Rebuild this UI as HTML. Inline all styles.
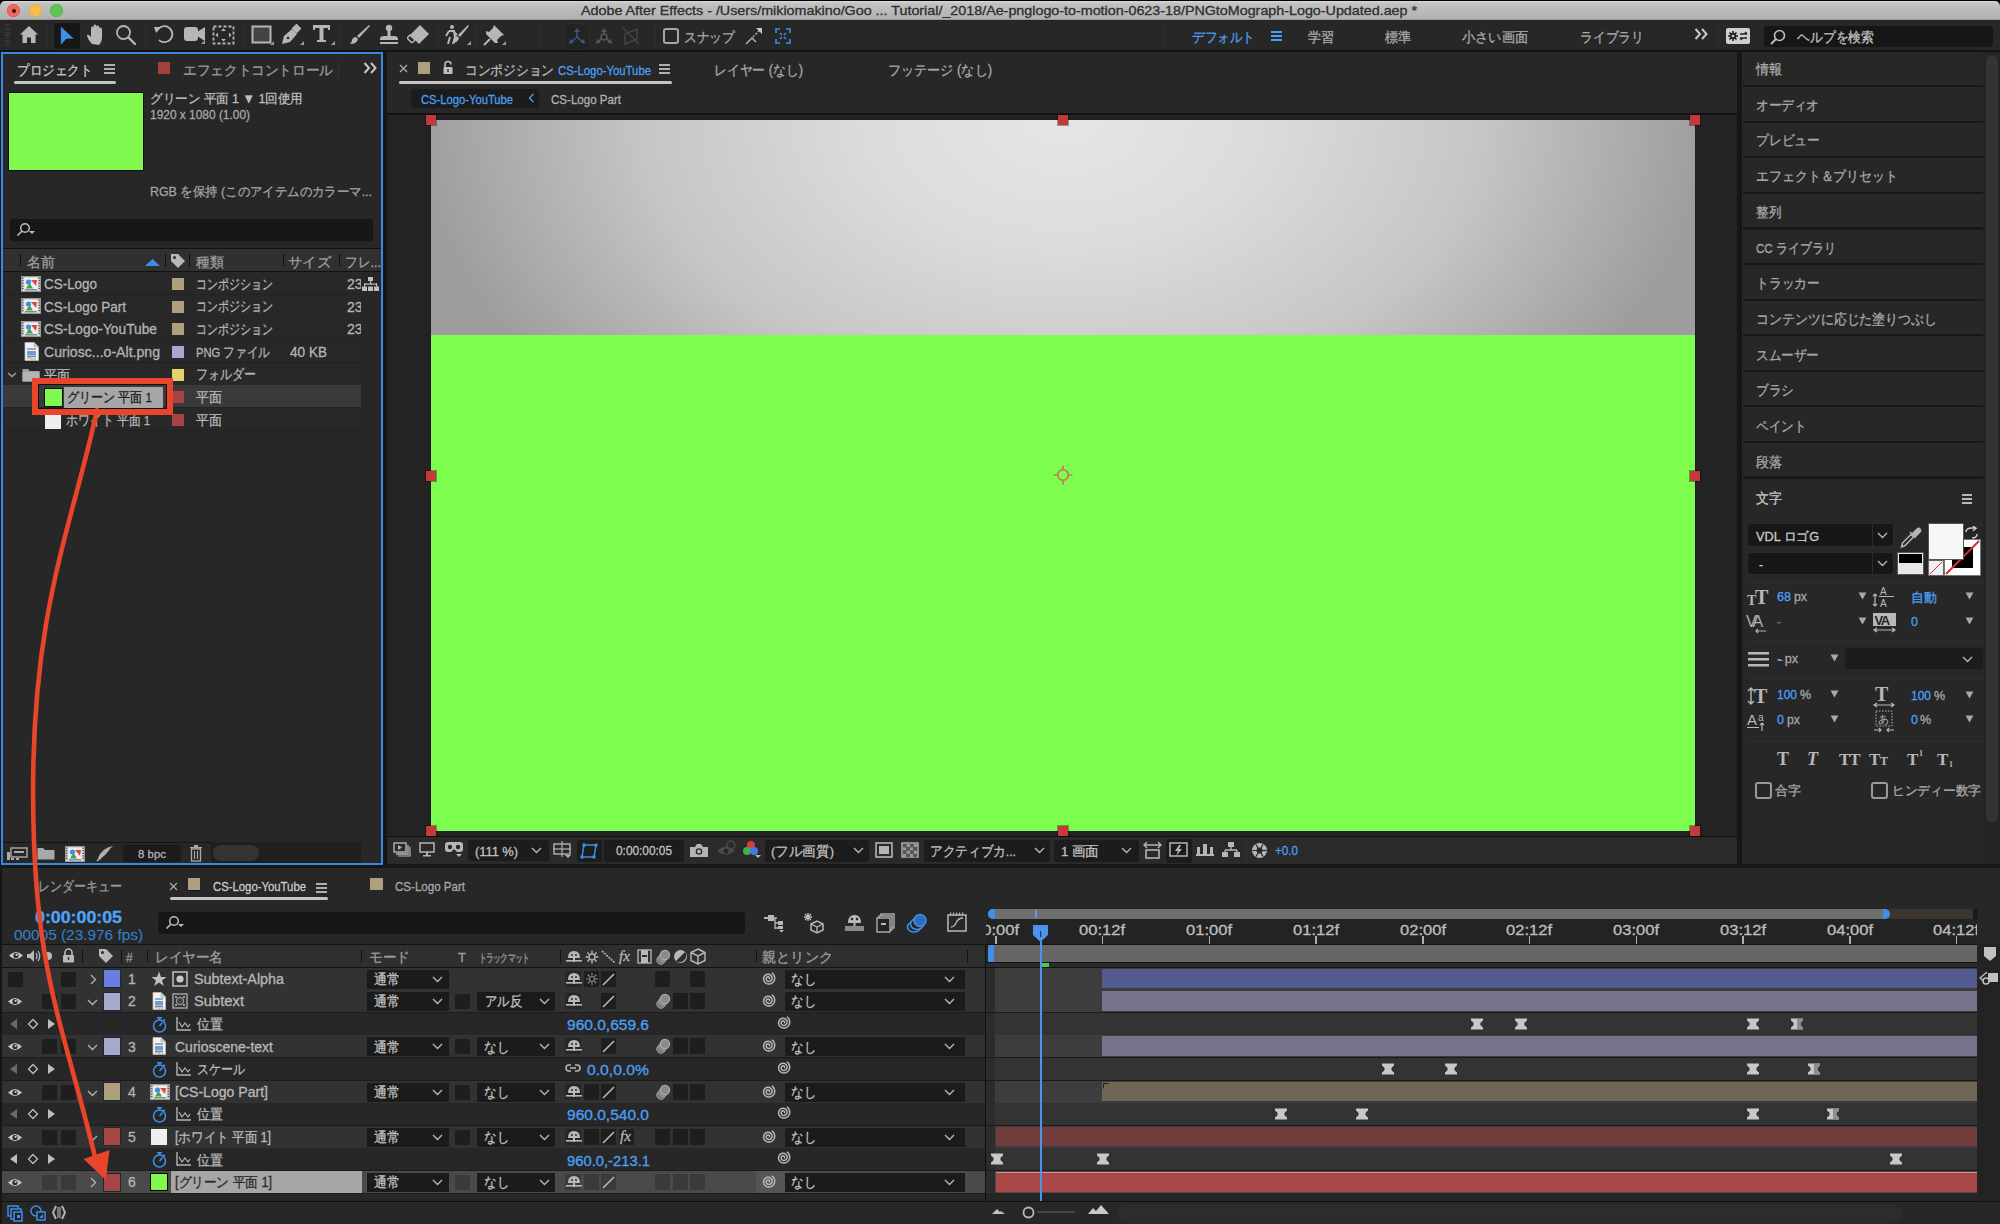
<!DOCTYPE html><html><head><meta charset="utf-8"><style>
html,body{margin:0;padding:0;}
body{width:2000px;height:1224px;position:relative;overflow:hidden;background:#161616;font-family:"Liberation Sans",sans-serif;}
body>div,body>svg{position:absolute;}
.t{white-space:nowrap;-webkit-text-stroke:0.3px currentColor;}
</style></head><body>
<div style="left:0px;top:0px;width:2000px;height:20px;background:#000;"></div>
<div style="left:0px;top:1px;width:2000px;height:19px;background:linear-gradient(#dadada 0px,#c2c2c2 2.5px,#b0b0b0 19px);border-radius:5px 5px 0 0;"></div>
<div style="left:0px;top:19px;width:2000px;height:1px;background:#9a9a9a;"></div>
<div style="left:7.0px;top:4px;width:13px;height:13px;border-radius:50%;background:#ee6a5f;box-shadow:inset 0 0 0 0.5px #d0534a;"></div>
<div style="left:28.5px;top:4px;width:13px;height:13px;border-radius:50%;background:#f5bd4f;box-shadow:inset 0 0 0 0.5px #d9a23a;"></div>
<div style="left:50.0px;top:4px;width:13px;height:13px;border-radius:50%;background:#61c554;box-shadow:inset 0 0 0 0.5px #4ea942;"></div>
<div style="left:11.5px;top:8.5px;width:4px;height:4px;background:#3a0c08;border-radius:50%;"></div>
<div class="t" style="left:581px;top:4.30px;font-size:13px;line-height:13px;color:#2e2e2e;transform:scaleX(1.1001);transform-origin:0 0;">Adobe After Effects - /Users/mikiomakino/Goo ... Tutorial/_2018/Ae-pnglogo-to-motion-0623-18/PNGtoMograph-Logo-Updated.aep *</div>
<div style="left:0px;top:20px;width:2000px;height:31px;background:#272727;"></div>
<div style="left:0px;top:50px;width:2000px;height:2px;background:#121212;"></div>
<div style="left:5px;top:24.0px;width:5px;height:1.3px;background:#3a3a3a;"></div>
<div style="left:5px;top:26.6px;width:5px;height:1.3px;background:#3a3a3a;"></div>
<div style="left:5px;top:29.2px;width:5px;height:1.3px;background:#3a3a3a;"></div>
<div style="left:5px;top:31.8px;width:5px;height:1.3px;background:#3a3a3a;"></div>
<div style="left:5px;top:34.4px;width:5px;height:1.3px;background:#3a3a3a;"></div>
<div style="left:5px;top:37.0px;width:5px;height:1.3px;background:#3a3a3a;"></div>
<div style="left:5px;top:39.6px;width:5px;height:1.3px;background:#3a3a3a;"></div>
<div style="left:5px;top:42.2px;width:5px;height:1.3px;background:#3a3a3a;"></div>
<div style="left:5px;top:44.8px;width:5px;height:1.3px;background:#3a3a3a;"></div>
<div style="left:47px;top:23px;width:1px;height:25px;background:#2c2c2c;"></div>
<div style="left:145px;top:23px;width:1px;height:25px;background:#2c2c2c;"></div>
<div style="left:243px;top:23px;width:1px;height:25px;background:#2c2c2c;"></div>
<div style="left:340px;top:23px;width:1px;height:25px;background:#2c2c2c;"></div>
<div style="left:438px;top:23px;width:1px;height:25px;background:#2c2c2c;"></div>
<div style="left:476px;top:23px;width:1px;height:25px;background:#2c2c2c;"></div>
<div style="left:540px;top:23px;width:1px;height:25px;background:#2c2c2c;"></div>
<div style="left:655px;top:23px;width:1px;height:25px;background:#2c2c2c;"></div>
<div style="left:1164px;top:23px;width:1px;height:25px;background:#2c2c2c;"></div>
<div style="left:1718px;top:23px;width:1px;height:25px;background:#2c2c2c;"></div>
<svg style="left:19px;top:25px;" width="20" height="19" viewBox="0 0 20 19"><path d="M10,1 L19,9.5 L16.5,9.5 V18 H12 V12.5 H8 V18 H3.5 V9.5 H1 Z" fill="#b6b6b6"/></svg>
<div style="left:54px;top:23px;width:26px;height:26px;background:#171717;border-radius:3px;box-shadow:0 0 0 1px #2a2a2a;"></div>
<svg style="left:59px;top:25px;" width="17" height="21" viewBox="0 0 17 21"><polygon points="1.5,1 15.5,14 7.5,14 1.5,20.5" fill="#3f8fe8" stroke="#0a0a0a" stroke-width="0.6"/></svg>
<svg style="left:86px;top:24px;" width="21" height="22" viewBox="0 0 21 22"><path d="M6,20 Q2,16 1,12 Q1,10 3,11 L5,13 V4 Q5,2.5 6.3,2.5 Q7.5,2.5 7.5,4 V10 V2 Q7.5,0.5 9,0.5 Q10.5,0.5 10.5,2 V10 V3 Q10.5,1.5 12,1.5 Q13.3,1.5 13.3,3 V10 V5 Q13.3,3.5 14.7,3.5 Q16,3.5 16,5 V14 Q16,18 13,21 Z" fill="#b6b6b6"/></svg>
<svg style="left:115px;top:24px;" width="22" height="22" viewBox="0 0 22 22"><circle cx="8.5" cy="8.5" r="6.5" fill="none" stroke="#b6b6b6" stroke-width="1.8"/><line x1="13.5" y1="13.5" x2="20" y2="20" stroke="#b6b6b6" stroke-width="2.4" stroke-linecap="round"/></svg>
<svg style="left:154px;top:24px;" width="21" height="21" viewBox="0 0 21 21"><path d="M3,7 A8,8 0 1,1 4,15" fill="none" stroke="#b6b6b6" stroke-width="1.8" stroke-dasharray="40 3 1.5 2 1.5 2 1.5 2 1.5"/><polygon points="0,3 7,3 2,9" fill="#b6b6b6"/></svg>
<svg style="left:183px;top:26px;" width="23" height="19" viewBox="0 0 23 19"><rect x="1" y="1" width="14" height="14" rx="3" fill="#b6b6b6"/><polygon points="14,6 22,1 22,15 14,10" fill="#b6b6b6"/><polygon points="18,18 22,14 22,18" fill="#9a9a9a"/></svg>
<svg style="left:212px;top:25px;" width="23" height="20" viewBox="0 0 23 20"><rect x="1.5" y="1.5" width="20" height="17" fill="none" stroke="#b6b6b6" stroke-width="1.8" stroke-dasharray="3,2"/><polygon points="11.5,3.5 14,6 9,6" fill="#b6b6b6"/><polygon points="11.5,16.5 14,14 9,14" fill="#b6b6b6"/><polygon points="3.5,10 6,7.5 6,12.5" fill="#b6b6b6"/><polygon points="19.5,10 17,7.5 17,12.5" fill="#b6b6b6"/></svg>
<svg style="left:251px;top:25px;" width="23" height="21" viewBox="0 0 23 21"><rect x="1.5" y="1.5" width="18" height="16" fill="#444" stroke="#b6b6b6" stroke-width="2"/><polygon points="19,20 23,16 23,20" fill="#9a9a9a"/></svg>
<svg style="left:281px;top:24px;" width="23" height="22" viewBox="0 0 23 22"><path d="M1,20 L3,12 L11,5 L16,10 L9,18 Z" fill="#b6b6b6"/><rect x="12" y="1" width="7" height="7" transform="rotate(45 15.5 4.5)" fill="#b6b6b6"/><circle cx="7" cy="14" r="1.3" fill="#232323"/><polygon points="19,21 23,17 23,21" fill="#9a9a9a"/></svg>
<svg style="left:312px;top:24px;" width="23" height="22" viewBox="0 0 23 22"><path d="M1,1 H18 V6 H16 V4 H11.5 V16 H14 V18 H5 V16 H7.5 V4 H3 V6 H1 Z" fill="#b6b6b6"/><polygon points="19,21 23,17 23,21" fill="#9a9a9a"/></svg>
<svg style="left:349px;top:24px;" width="22" height="22" viewBox="0 0 22 22"><path d="M20,1 L21,2 L10,14 L8,12 Z" fill="#b6b6b6"/><path d="M7,13 L9,15 Q8,20 1,20 Q3,18 3,16 Q4,13 7,13 Z" fill="#b6b6b6"/></svg>
<svg style="left:378px;top:24px;" width="22" height="22" viewBox="0 0 22 22"><circle cx="11" cy="4" r="3.2" fill="#b6b6b6"/><rect x="9.5" y="6" width="3" height="6" fill="#b6b6b6"/><path d="M2,15 Q2,12 6,12 H16 Q20,12 20,15 V16 H2 Z" fill="#b6b6b6"/><rect x="2" y="18" width="18" height="2" fill="#b6b6b6"/></svg>
<svg style="left:407px;top:24px;" width="24" height="22" viewBox="0 0 24 22"><path d="M13,1 L22,10 L12,20 L3,11 Z" fill="#b6b6b6"/><path d="M3,11 L8,16 L6,18 Q5,19 4,18 L1,15 Q0,14 1,13 Z" fill="none" stroke="#b6b6b6" stroke-width="1.5"/></svg>
<svg style="left:444px;top:24px;" width="28" height="22" viewBox="0 0 28 22"><circle cx="8" cy="3" r="2" fill="#b6b6b6"/><path d="M5,7 H10 L11,13 L9,20 M6,13 L4,20 M5,7 L2,12 M10,8 L13,11" fill="none" stroke="#b6b6b6" stroke-width="2"/><path d="M24,1 L25,2 L16,13 L14,11 Z" fill="#b6b6b6"/><path d="M13,12 L15,14 Q14,19 8,19 Q10,17 10,15 Q11,12 13,12 Z" fill="#b6b6b6"/><polygon points="23,21 27,17 27,21" fill="#9a9a9a"/></svg>
<svg style="left:483px;top:24px;" width="23" height="22" viewBox="0 0 23 22"><path d="M11,1 L21,11 L18,12 L14,16 L15,19 L12,19 L3,10 L3,7 L6,8 L10,4 Z" fill="#b6b6b6"/><line x1="7" y1="15" x2="1" y2="21" stroke="#b6b6b6" stroke-width="2"/><polygon points="19,21 23,17 23,21" fill="#9a9a9a"/></svg>
<div style="left:565px;top:24px;width:24px;height:25px;background:#232323;border-radius:3px;box-shadow:0 0 0 1px #2c2c2c;"></div>
<svg style="left:567px;top:27px;" width="20" height="18" viewBox="0 0 20 18"><path d="M10,2 V10 L3,16 M10,10 L17,16" fill="none" stroke="#36597f" stroke-width="1.6"/><polygon points="10,1 7,5 13,5" fill="#36597f"/><polygon points="2,17 3,12 7,15" fill="#36597f"/><polygon points="18,17 13,15 17,12" fill="#36597f"/></svg>
<svg style="left:594px;top:27px;" width="20" height="18" viewBox="0 0 20 18"><path d="M10,2 V7 M7,12 L3,16 M13,12 L17,16" fill="none" stroke="#555" stroke-width="1.6"/><circle cx="10" cy="10" r="3" fill="none" stroke="#555" stroke-width="1.6"/><polygon points="10,1 7,5 13,5" fill="#555"/><polygon points="2,17 3,12 7,15" fill="#555"/><polygon points="18,17 13,15 17,12" fill="#555"/></svg>
<svg style="left:621px;top:26px;" width="20" height="20" viewBox="0 0 20 20"><path d="M4,8 L16,3 V13 L4,18 Z M2,2 L18,18" fill="none" stroke="#444" stroke-width="1.5"/></svg>
<div style="left:663px;top:28px;width:16px;height:16px;background:transparent;box-sizing:border-box;border:2.2px solid #a5a5a5;border-radius:3px;"></div>
<div class="t" style="left:684px;top:30.57px;font-size:13.5px;line-height:13.5px;color:#a8a8a8;transform:scaleX(0.9107);transform-origin:0 0;width:56.00px;text-align:justify;text-align-last:justify;">スナップ</div>
<svg style="left:745px;top:27px;" width="18" height="18" viewBox="0 0 18 18"><path d="M1,17 L7,11 L11,15" fill="none" stroke="#b8b8b8" stroke-width="1.4"/><path d="M8,10 L15,3" stroke="#b8b8b8" stroke-width="1.4" stroke-dasharray="2,1.5"/><polygon points="17,1 17,7 11,1" fill="#c8c8c8"/></svg>
<svg style="left:775px;top:28px;" width="16" height="16" viewBox="0 0 16 16"><path d="M1,5 V1 H5 M11,1 H15 V5 M15,11 V15 H11 M5,15 H1 V11" fill="none" stroke="#3d8fe8" stroke-width="1.6"/><path d="M5,5 L7,7 M11,5 L9,7 M5,11 L7,9 M11,11 L9,9" stroke="#3d8fe8" stroke-width="1.4"/></svg>
<div class="t" style="left:1192px;top:30.15px;font-size:14px;line-height:14px;color:#4b9ff2;transform:scaleX(0.9000);transform-origin:0 0;width:70.00px;text-align:justify;text-align-last:justify;">デフォルト</div>
<div style="left:1271px;top:31px;width:11px;height:2px;background:#4b9ff2;"></div>
<div style="left:1271px;top:35px;width:11px;height:2px;background:#4b9ff2;"></div>
<div style="left:1271px;top:39px;width:11px;height:2px;background:#4b9ff2;"></div>
<div class="t" style="left:1308px;top:30.15px;font-size:14px;line-height:14px;color:#a8a8a8;transform:scaleX(0.9286);transform-origin:0 0;width:28.00px;text-align:justify;text-align-last:justify;">学習</div>
<div class="t" style="left:1385px;top:30.15px;font-size:14px;line-height:14px;color:#a8a8a8;transform:scaleX(0.9286);transform-origin:0 0;width:28.00px;text-align:justify;text-align-last:justify;">標準</div>
<div class="t" style="left:1462px;top:30.15px;font-size:14px;line-height:14px;color:#a8a8a8;transform:scaleX(0.9429);transform-origin:0 0;width:70.00px;text-align:justify;text-align-last:justify;">小さい画面</div>
<div class="t" style="left:1580px;top:30.15px;font-size:14px;line-height:14px;color:#a8a8a8;transform:scaleX(0.9143);transform-origin:0 0;width:70.00px;text-align:justify;text-align-last:justify;">ライブラリ</div>
<svg style="left:1694px;top:28px;" width="15" height="12" viewBox="0 0 15 12"><polyline points="1.5,1 6,6 1.5,11" fill="none" stroke="#c8c8c8" stroke-width="2"/><polyline points="8,1 12.5,6 8,11" fill="none" stroke="#c8c8c8" stroke-width="2"/></svg>
<div style="left:1726px;top:28px;width:24px;height:16px;background:#cfcfcf;border-radius:2px;"></div>
<svg style="left:1726px;top:28px;" width="24" height="16" viewBox="0 0 24 16"><circle cx="7" cy="8" r="3.2" fill="#232323"/><line x1="9.5" y1="8.0" x2="12.0" y2="8.0" stroke="#232323" stroke-width="1.6"/><line x1="8.768470672918" y1="9.767062952763414" x2="10.536941345835999" y2="11.53412590552683" stroke="#232323" stroke-width="1.6"/><line x1="7.001990816776833" y1="10.499999207329587" x2="7.003981633553666" y2="12.999998414659174" stroke="#232323" stroke-width="1.6"/><line x1="5.234345887949987" y1="9.76987727162108" x2="3.4686917758999742" y2="11.53975454324216" stroke="#232323" stroke-width="1.6"/><line x1="4.500003170681151" y1="8.003981632291216" x2="2.000006341362303" y2="8.007963264582434" stroke="#232323" stroke-width="1.6"/><line x1="5.228717252019318" y1="6.235755848328808" x2="3.457434504038636" y2="4.4715116966576165" stroke="#232323" stroke-width="1.6"/><line x1="6.994027554719296" y1="5.500007134030705" x2="6.9880551094385925" y2="3.0000142680614097" stroke="#232323" stroke-width="1.6"/><line x1="8.762833072521056" y1="6.227312898894458" x2="10.525666145042115" y2="4.454625797788916" stroke="#232323" stroke-width="1.6"/><circle cx="7" cy="8" r="1.3" fill="#cfcfcf"/><path d="M14,6 H21 M19,4 L21,6 M21,10 H14 M16,12 L14,10" fill="none" stroke="#232323" stroke-width="1.6"/></svg>
<div style="left:1764px;top:26px;width:229px;height:21px;background:#161616;border-radius:4px;box-shadow:0 0 0 1px #262626;"></div>
<svg style="left:1769px;top:29px;" width="18" height="16" viewBox="0 0 18 16"><circle cx="10.5" cy="6.5" r="5" fill="none" stroke="#c0c0c0" stroke-width="1.6"/><line x1="7" y1="10" x2="2" y2="15" stroke="#c0c0c0" stroke-width="1.8"/></svg>
<div class="t" style="left:1797px;top:30.15px;font-size:14px;line-height:14px;color:#c0c0c0;transform:scaleX(0.9167);transform-origin:0 0;width:84.00px;text-align:justify;text-align-last:justify;">ヘルプを検索</div>
<div style="left:1px;top:52px;width:382px;height:813px;background:#3a87de;"></div>
<div style="left:3px;top:54px;width:378px;height:809px;background:#272727;"></div>
<div style="left:387px;top:52px;width:1350px;height:812px;background:#272727;"></div>
<div style="left:1742px;top:52px;width:243px;height:812px;background:#272727;"></div>
<div style="left:1983px;top:52px;width:17px;height:812px;background:#242424;"></div>
<div style="left:1986px;top:55px;width:12px;height:767px;background:#333333;border-radius:6px;"></div>
<div style="left:2px;top:868px;width:1998px;height:356px;background:#272727;"></div>
<div style="left:387px;top:113px;width:1350px;height:2px;background:#121212;"></div>
<div style="left:387px;top:115px;width:1350px;height:721px;background:#232323;"></div>
<div style="left:387px;top:836px;width:1350px;height:1px;background:#0e0e0e;"></div>
<div style="left:387px;top:837px;width:1350px;height:27px;background:#2a2a2a;"></div>
<div style="left:430px;top:119px;width:1266px;height:713px;background:#2a1530;"></div>
<div style="left:431px;top:120px;width:1264px;height:215px;background:radial-gradient(ellipse 640px 420px at 632px 0px,#e6e6e6 0%,#dcdcdc 30%,#c6c6c6 65%,#9e9e9e 100%);"></div>
<div style="left:431px;top:335px;width:1264px;height:496px;background:#7dfd4d;"></div>
<div style="left:426px;top:115px;width:10px;height:10px;background:#c43a3c;box-shadow:0 0 0 1px rgba(0,0,0,0.35);"></div>
<div style="left:426px;top:470.5px;width:10px;height:10px;background:#c43a3c;box-shadow:0 0 0 1px rgba(0,0,0,0.35);"></div>
<div style="left:426px;top:826px;width:10px;height:10px;background:#c43a3c;box-shadow:0 0 0 1px rgba(0,0,0,0.35);"></div>
<div style="left:1058px;top:115px;width:10px;height:10px;background:#c43a3c;box-shadow:0 0 0 1px rgba(0,0,0,0.35);"></div>
<div style="left:1058px;top:826px;width:10px;height:10px;background:#c43a3c;box-shadow:0 0 0 1px rgba(0,0,0,0.35);"></div>
<div style="left:1690px;top:115px;width:10px;height:10px;background:#c43a3c;box-shadow:0 0 0 1px rgba(0,0,0,0.35);"></div>
<div style="left:1690px;top:470.5px;width:10px;height:10px;background:#c43a3c;box-shadow:0 0 0 1px rgba(0,0,0,0.35);"></div>
<div style="left:1690px;top:826px;width:10px;height:10px;background:#c43a3c;box-shadow:0 0 0 1px rgba(0,0,0,0.35);"></div>
<svg style="left:1053px;top:465px;" width="20" height="20" viewBox="0 0 20 20"><circle cx="10" cy="10" r="5.3" fill="none" stroke="#d06a5a" stroke-width="1.6"/><path d="M10,0.5 V4.7 M10,15.3 V19.5 M0.5,10 H4.7 M15.3,10 H19.5" stroke="#d0785a" stroke-width="1.7"/></svg>
<svg style="left:399px;top:64px;" width="9" height="9" viewBox="0 0 9 9"><line x1="1" y1="1" x2="8" y2="8" stroke="#aaa" stroke-width="1.2"/><line x1="8" y1="1" x2="1" y2="8" stroke="#aaa" stroke-width="1.2"/></svg>
<div style="left:418px;top:62px;width:12px;height:12px;background:#b09f7f;"></div>
<svg style="left:442px;top:60px;" width="12" height="15" viewBox="0 0 12 15"><path d="M3,7 V4.5 A3,3 0 0,1 9,4.5" fill="none" stroke="#c0c0c0" stroke-width="1.6"/><rect x="1.5" y="7" width="9" height="7" rx="1" fill="#c0c0c0"/><rect x="5.3" y="9" width="1.4" height="3" fill="#2a2a2a"/></svg>
<div class="t" style="left:465px;top:63.15px;font-size:14px;line-height:14px;color:#b8b8b8;transform:scaleX(0.9082);transform-origin:0 0;width:98.00px;text-align:justify;text-align-last:justify;">コンポジション</div>
<div class="t" style="left:558px;top:63.57px;font-size:13.5px;line-height:13.5px;color:#4b9ff2;transform:scaleX(0.8392);transform-origin:0 0;">CS-Logo-YouTube</div>
<div style="left:659px;top:64px;width:11px;height:2px;background:#b0b0b0;"></div>
<div style="left:659px;top:68px;width:11px;height:2px;background:#b0b0b0;"></div>
<div style="left:659px;top:72px;width:11px;height:2px;background:#b0b0b0;"></div>
<div style="left:399px;top:81px;width:273px;height:3px;background:#c4c4c4;border-radius:2px;"></div>
<div class="t" style="left:714px;top:63.15px;font-size:14px;line-height:14px;color:#a8a8a8;transform:scaleX(0.9155);transform-origin:0 0;width:97.22px;text-align:justify;text-align-last:justify;">レイヤー (なし)</div>
<div class="t" style="left:888px;top:63.15px;font-size:14px;line-height:14px;color:#a8a8a8;transform:scaleX(0.9351);transform-origin:0 0;width:111.22px;text-align:justify;text-align-last:justify;">フッテージ (なし)</div>
<div style="left:411px;top:89px;width:128px;height:19px;background:#1b1b1b;border-radius:3px;"></div>
<div class="t" style="left:421px;top:93.92px;font-size:12.5px;line-height:12.5px;color:#4b9ff2;transform:scaleX(0.8966);transform-origin:0 0;">CS-Logo-YouTube</div>
<svg style="left:528px;top:93px;" width="7" height="10" viewBox="0 0 7 10"><polyline points="5.5,1 1.5,5 5.5,9" fill="none" stroke="#4b9ff2" stroke-width="1.4"/></svg>
<div class="t" style="left:551px;top:93.92px;font-size:12.5px;line-height:12.5px;color:#b0b0b0;transform:scaleX(0.9244);transform-origin:0 0;">CS-Logo Part</div>
<svg style="left:393px;top:842px;" width="18" height="15" viewBox="0 0 18 15"><rect x="1" y="1" width="12" height="9" fill="none" stroke="#b5b5b5" stroke-width="1.4"/><polygon points="5,3 9,5.5 5,8" fill="#b5b5b5"/><path d="M3,12 H15 V3" fill="none" stroke="#b5b5b5" stroke-width="1.4"/><path d="M5,14 H17 V5" fill="none" stroke="#b5b5b5" stroke-width="1.2"/></svg>
<svg style="left:419px;top:842px;" width="16" height="15" viewBox="0 0 16 15"><rect x="1" y="1" width="14" height="9" fill="none" stroke="#b5b5b5" stroke-width="1.5"/><rect x="7" y="10" width="2" height="3" fill="#b5b5b5"/><rect x="4" y="13" width="8" height="1.5" fill="#b5b5b5"/></svg>
<svg style="left:444px;top:841px;" width="20" height="17" viewBox="0 0 20 17"><path d="M1,4 Q1,1 4,1 H16 Q19,1 19,4 V8 Q19,11 16,11 H13 L10,8 L7,11 H4 Q1,11 1,8 Z" fill="#b5b5b5"/><circle cx="6" cy="6" r="2.2" fill="#262626"/><circle cx="14" cy="6" r="2.2" fill="#262626"/><polygon points="12,13 18,13 15,16" fill="#b5b5b5"/></svg>
<div style="left:468px;top:840px;width:81px;height:21px;background:#1c1c1c;border-radius:3px;"></div>
<div class="t" style="left:475px;top:845.00px;font-size:13px;line-height:13px;color:#c0c0c0;transform:scaleX(0.9865);transform-origin:0 0;">(111 %)</div>
<svg style="left:531px;top:847px;" width="11" height="7" viewBox="0 0 11 7"><polyline points="1,1 5.5,5.5 10,1" fill="none" stroke="#b5b5b5" stroke-width="1.4"/></svg>
<svg style="left:553px;top:841px;" width="19" height="18" viewBox="0 0 19 18"><rect x="1" y="3" width="16" height="10" fill="none" stroke="#b5b5b5" stroke-width="1.4"/><line x1="9" y1="0" x2="9" y2="16" stroke="#b5b5b5" stroke-width="1.2"/><line x1="0" y1="8" x2="18" y2="8" stroke="#b5b5b5" stroke-width="1.2"/><polygon points="12,14 18,14 15,17" fill="#b5b5b5"/></svg>
<div style="left:577px;top:840px;width:25px;height:22px;background:#1c1c1c;border-radius:3px;"></div>
<svg style="left:580px;top:843px;" width="19" height="16" viewBox="0 0 19 16"><polygon points="4,2 16,2 14,14 2,14" fill="none" stroke="#3d8fe8" stroke-width="1.5"/><g fill="#3d8fe8"><rect x="2.5" y="0.5" width="3" height="3"/><rect x="14.5" y="0.5" width="3" height="3"/><rect x="12.5" y="12.5" width="3" height="3"/><rect x="0.5" y="12.5" width="3" height="3"/></g></svg>
<div style="left:604px;top:840px;width:80px;height:22px;background:#1c1c1c;border-radius:3px;"></div>
<div class="t" style="left:616px;top:845.42px;font-size:12.5px;line-height:12.5px;color:#c0c0c0;transform:scaleX(0.9479);transform-origin:0 0;">0:00:00:05</div>
<svg style="left:689px;top:843px;" width="20" height="15" viewBox="0 0 20 15"><path d="M1,4 H6 L8,1 H12 L14,4 H19 V14 H1 Z" fill="#b5b5b5"/><circle cx="10" cy="8.5" r="3.3" fill="#262626"/><circle cx="10" cy="8.5" r="2" fill="#b5b5b5"/></svg>
<svg style="left:716px;top:840px;" width="20" height="18" viewBox="0 0 20 18"><path d="M1,11 Q10,2 19,11 Q10,18 1,11 Z" fill="#4a4a4a"/><circle cx="10" cy="11" r="2.5" fill="#262626"/><circle cx="15" cy="5" r="4" fill="none" stroke="#4a4a4a" stroke-width="1.5"/></svg>
<svg style="left:742px;top:840px;" width="20" height="19" viewBox="0 0 20 19"><circle cx="9" cy="5" r="4" fill="#e0393a"/><circle cx="5" cy="11" r="4" fill="#3fb14b"/><circle cx="12" cy="11" r="4" fill="#3e7de6"/><polygon points="13,15 19,15 16,18" fill="#b5b5b5"/></svg>
<div style="left:765px;top:840px;width:104px;height:22px;background:#1c1c1c;border-radius:3px;"></div>
<div class="t" style="left:771px;top:844.57px;font-size:13.5px;line-height:13.5px;color:#c0c0c0;transform:scaleX(0.9692);transform-origin:0 0;width:65.00px;text-align:justify;text-align-last:justify;">(フル画質)</div>
<svg style="left:853px;top:847px;" width="11" height="7" viewBox="0 0 11 7"><polyline points="1,1 5.5,5.5 10,1" fill="none" stroke="#b5b5b5" stroke-width="1.4"/></svg>
<svg style="left:875px;top:842px;" width="18" height="16" viewBox="0 0 18 16"><rect x="1" y="1" width="16" height="14" fill="none" stroke="#b5b5b5" stroke-width="1.6"/><rect x="4" y="4" width="10" height="8" fill="#b5b5b5"/></svg>
<svg style="left:901px;top:842px;" width="18" height="16" viewBox="0 0 18 16"><rect x="1" y="1" width="16" height="14" fill="none" stroke="#b5b5b5" stroke-width="1.4"/><rect x="2.0" y="2.0" width="3.5" height="3.3" fill="#555"/><rect x="2.0" y="5.3" width="3.5" height="3.3" fill="#999"/><rect x="2.0" y="8.6" width="3.5" height="3.3" fill="#555"/><rect x="2.0" y="11.899999999999999" width="3.5" height="3.3" fill="#999"/><rect x="5.5" y="2.0" width="3.5" height="3.3" fill="#999"/><rect x="5.5" y="5.3" width="3.5" height="3.3" fill="#555"/><rect x="5.5" y="8.6" width="3.5" height="3.3" fill="#999"/><rect x="5.5" y="11.899999999999999" width="3.5" height="3.3" fill="#555"/><rect x="9.0" y="2.0" width="3.5" height="3.3" fill="#555"/><rect x="9.0" y="5.3" width="3.5" height="3.3" fill="#999"/><rect x="9.0" y="8.6" width="3.5" height="3.3" fill="#555"/><rect x="9.0" y="11.899999999999999" width="3.5" height="3.3" fill="#999"/><rect x="12.5" y="2.0" width="3.5" height="3.3" fill="#999"/><rect x="12.5" y="5.3" width="3.5" height="3.3" fill="#555"/><rect x="12.5" y="8.6" width="3.5" height="3.3" fill="#999"/><rect x="12.5" y="11.899999999999999" width="3.5" height="3.3" fill="#555"/></svg>
<div style="left:924px;top:840px;width:126px;height:22px;background:#1c1c1c;border-radius:3px;"></div>
<div class="t" style="left:930px;top:844.57px;font-size:13.5px;line-height:13.5px;color:#c0c0c0;transform:scaleX(0.9027);transform-origin:0 0;width:95.27px;text-align:justify;text-align-last:justify;">アクティブカ...</div>
<svg style="left:1034px;top:847px;" width="11" height="7" viewBox="0 0 11 7"><polyline points="1,1 5.5,5.5 10,1" fill="none" stroke="#b5b5b5" stroke-width="1.4"/></svg>
<div style="left:1054px;top:840px;width:85px;height:22px;background:#1c1c1c;border-radius:3px;"></div>
<div class="t" style="left:1061px;top:844.57px;font-size:13.5px;line-height:13.5px;color:#c0c0c0;transform:scaleX(0.9678);transform-origin:0 0;width:39.27px;text-align:justify;text-align-last:justify;">1 画面</div>
<svg style="left:1121px;top:847px;" width="11" height="7" viewBox="0 0 11 7"><polyline points="1,1 5.5,5.5 10,1" fill="none" stroke="#b5b5b5" stroke-width="1.4"/></svg>
<svg style="left:1143px;top:841px;" width="19" height="18" viewBox="0 0 19 18"><path d="M1,4 H18 M4,1 L1,4 L4,7 M15,1 L18,4 L15,7" fill="none" stroke="#b5b5b5" stroke-width="1.4"/><rect x="3" y="9" width="13" height="8" fill="none" stroke="#b5b5b5" stroke-width="1.6"/></svg>
<div style="left:1166px;top:839px;width:26px;height:24px;background:#1c1c1c;border-radius:3px;"></div>
<svg style="left:1169px;top:842px;" width="20" height="18" viewBox="0 0 20 18"><rect x="1" y="1" width="17" height="13" fill="none" stroke="#b5b5b5" stroke-width="1.5"/><polygon points="10,3 6,9 9,9 7,14 13,7 10,7 12,3" fill="#b5b5b5"/></svg>
<svg style="left:1196px;top:842px;" width="18" height="15" viewBox="0 0 18 15"><rect x="0" y="12" width="18" height="2" fill="#b5b5b5"/><rect x="1" y="5" width="3" height="7" fill="#b5b5b5"/><rect x="7" y="2" width="4" height="10" fill="#b5b5b5"/><rect x="14" y="5" width="3" height="7" fill="#b5b5b5"/></svg>
<svg style="left:1222px;top:842px;" width="18" height="16" viewBox="0 0 18 16"><rect x="6" y="0" width="6" height="5" fill="#b5b5b5"/><path d="M9,5 V8 M3,8 H15 M3,8 V10 M15,8 V10" stroke="#b5b5b5" stroke-width="1.3" fill="none"/><rect x="0" y="10" width="6" height="5" fill="#b5b5b5"/><rect x="12" y="10" width="6" height="5" fill="#b5b5b5"/></svg>
<div style="left:1246px;top:840px;width:1px;height:22px;background:#333;"></div>
<svg style="left:1251px;top:842px;" width="17" height="17" viewBox="0 0 17 17"><circle cx="8.5" cy="8.5" r="7.5" fill="#b5b5b5"/><line x1="8.5" y1="8.5" x2="15.5" y2="8.5" stroke="#262626" stroke-width="1.2"/><line x1="8.5" y1="8.5" x2="11.999985154907819" y2="14.562186397284801" stroke="#262626" stroke-width="1.2"/><line x1="8.5" y1="8.5" x2="4.999970309878605" y2="14.562160684794549" stroke="#262626" stroke-width="1.2"/><line x1="8.5" y1="8.5" x2="1.5000000001888942" y2="8.499948575128556" stroke="#262626" stroke-width="1.2"/><line x1="8.5" y1="8.5" x2="5.000059380494649" y2="2.437787890552121" stroke="#262626" stroke-width="1.2"/><line x1="8.5" y1="8.5" x2="12.000074225146076" y2="2.437865028022876" stroke="#262626" stroke-width="1.2"/><circle cx="8.5" cy="8.5" r="3" fill="#262626"/></svg>
<div class="t" style="left:1275px;top:845.42px;font-size:12.5px;line-height:12.5px;color:#4b9ff2;transform:scaleX(0.9321);transform-origin:0 0;">+0.0</div>
<div class="t" style="left:16.5px;top:63.15px;font-size:14px;line-height:14px;color:#c9c9c9;transform:scaleX(0.8929);transform-origin:0 0;width:84.00px;text-align:justify;text-align-last:justify;">プロジェクト</div>
<div style="left:104px;top:64px;width:11px;height:2px;background:#b0b0b0;"></div>
<div style="left:104px;top:68px;width:11px;height:2px;background:#b0b0b0;"></div>
<div style="left:104px;top:72px;width:11px;height:2px;background:#b0b0b0;"></div>
<div style="left:14px;top:81px;width:102px;height:3px;background:#c4c4c4;border-radius:2px;"></div>
<div style="left:158px;top:62px;width:12px;height:12px;background:#a63f3f;"></div>
<div class="t" style="left:183px;top:63.15px;font-size:14px;line-height:14px;color:#9b9b9b;transform:scaleX(0.9740);transform-origin:0 0;width:154.00px;text-align:justify;text-align-last:justify;">エフェクトコントロール</div>
<div style="left:338px;top:60px;width:1px;height:18px;background:#333;"></div>
<svg style="left:363px;top:62px;" width="15" height="12" viewBox="0 0 15 12"><polyline points="1.5,1 6,6 1.5,11" fill="none" stroke="#c8c8c8" stroke-width="2"/><polyline points="8,1 12.5,6 8,11" fill="none" stroke="#c8c8c8" stroke-width="2"/></svg>
<div style="left:9px;top:93px;width:134px;height:77px;background:#80fa4f;box-shadow:0 0 0 1px #160a16;"></div>
<div class="t" style="left:150px;top:92.30px;font-size:13px;line-height:13px;color:#bdbdbd;transform:scaleX(0.9636);transform-origin:0 0;width:158.78px;text-align:justify;text-align-last:justify;">グリーン 平面 1 ▼ 1回使用</div>
<div class="t" style="left:150px;top:108.84px;font-size:12px;line-height:12px;color:#a6a6a6;transform:scaleX(0.9927);transform-origin:0 0;">1920 x 1080 (1.00)</div>
<div class="t" style="left:150px;top:185.00px;font-size:13px;line-height:13px;color:#a3a3a3;transform:scaleX(0.9546);transform-origin:0 0;width:232.56px;text-align:justify;text-align-last:justify;">RGB を保持 (このアイテムのカラーマ...</div>
<div style="left:10px;top:219px;width:363px;height:22px;background:#171717;border-radius:3px;box-shadow:0 0 0 1px #262626;"></div>
<svg style="left:16px;top:222px;" width="22" height="16" viewBox="0 0 22 16"><circle cx="9" cy="6" r="4.3" fill="none" stroke="#c0c0c0" stroke-width="1.5"/><line x1="5.8" y1="9.2" x2="1.5" y2="13.5" stroke="#c0c0c0" stroke-width="1.6"/><polygon points="13,9 19,9 16,12" fill="#c0c0c0"/></svg>
<div style="left:3px;top:248px;width:378px;height:1.5px;background:#111;"></div>
<div style="left:3px;top:249px;width:378px;height:22px;background:#303030;"></div>
<div style="left:3px;top:270.8px;width:378px;height:1.5px;background:#111;"></div>
<div style="left:20px;top:254px;width:1.2px;height:13px;background:#121212;"></div>
<div style="left:165px;top:254px;width:1.2px;height:13px;background:#121212;"></div>
<div style="left:189px;top:254px;width:1.2px;height:13px;background:#121212;"></div>
<div style="left:283px;top:254px;width:1.2px;height:13px;background:#121212;"></div>
<div style="left:339px;top:254px;width:1.2px;height:13px;background:#121212;"></div>
<div class="t" style="left:27px;top:255.15px;font-size:14px;line-height:14px;color:#9e9e9e;transform:scaleX(1.0000);transform-origin:0 0;width:28.00px;text-align:justify;text-align-last:justify;">名前</div>
<svg style="left:144px;top:258px;" width="17" height="9" viewBox="0 0 17 9"><polygon points="1,8 8.5,1 16,8" fill="#3d8fe8"/></svg>
<svg style="left:170px;top:253px;" width="16" height="16" viewBox="0 0 16 16"><path d="M1,1 H8 L15,8 L8,15 L1,8 Z" fill="#b8b8b8"/><circle cx="4.5" cy="4.5" r="1.5" fill="#2b2b2b"/></svg>
<div class="t" style="left:196px;top:255.15px;font-size:14px;line-height:14px;color:#9e9e9e;transform:scaleX(1.0000);transform-origin:0 0;width:28.00px;text-align:justify;text-align-last:justify;">種類</div>
<div class="t" style="left:288px;top:255.15px;font-size:14px;line-height:14px;color:#9e9e9e;transform:scaleX(1.0238);transform-origin:0 0;width:42.00px;text-align:justify;text-align-last:justify;">サイズ</div>
<div class="t" style="left:345px;top:255.15px;font-size:14px;line-height:14px;color:#9e9e9e;transform:scaleX(0.9074);transform-origin:0 0;width:39.67px;text-align:justify;text-align-last:justify;">フレ...</div>
<div style="left:3px;top:272.0px;width:358px;height:22px;background:#282828;"></div>
<div style="left:3px;top:294.0px;width:358px;height:0.67px;background:#222;"></div>
<svg style="left:21px;top:275.5px;" width="20" height="16" viewBox="0 0 20 16"><rect x="0.5" y="0.5" width="19" height="15" fill="#d8d8d8" stroke="#9a9a9a"/><rect x="3.5" y="2" width="13" height="12" fill="#f0f0f0"/><g fill="#555"><rect x="1" y="1.5" width="1.5" height="1.3"/><rect x="17.5" y="1.5" width="1.5" height="1.3"/><rect x="1" y="4.1" width="1.5" height="1.3"/><rect x="17.5" y="4.1" width="1.5" height="1.3"/><rect x="1" y="6.7" width="1.5" height="1.3"/><rect x="17.5" y="6.7" width="1.5" height="1.3"/><rect x="1" y="9.3" width="1.5" height="1.3"/><rect x="17.5" y="9.3" width="1.5" height="1.3"/><rect x="1" y="11.9" width="1.5" height="1.3"/><rect x="17.5" y="11.9" width="1.5" height="1.3"/></g><circle cx="7.5" cy="6" r="2.6" fill="#3d8fe8"/><polygon points="10,4 16,4 15,10" fill="#e0463a"/><polygon points="8.5,7 12,12.5 5,12.5" fill="#3aa64a"/><rect x="4" y="13" width="12" height="1.4" fill="#888"/></svg>
<div class="t" style="left:44px;top:277.15px;font-size:14px;line-height:14px;color:#b4b4b4;transform:scaleX(0.9592);transform-origin:0 0;">CS-Logo</div>
<div style="left:172px;top:278.0px;width:12px;height:12px;background:#b09f7f;"></div>
<div class="t" style="left:196px;top:277.57px;font-size:13.5px;line-height:13.5px;color:#b4b4b4;transform:scaleX(0.7857);transform-origin:0 0;width:98.00px;text-align:justify;text-align-last:justify;">コンポジション</div>
<div class="t" style="left:347px;top:277.15px;font-size:14px;line-height:14px;color:#b4b4b4;width:14px;overflow:hidden;">23</div>
<div style="left:3px;top:294.67px;width:358px;height:22px;background:#282828;"></div>
<div style="left:3px;top:316.67px;width:358px;height:0.67px;background:#222;"></div>
<svg style="left:21px;top:298.17px;" width="20" height="16" viewBox="0 0 20 16"><rect x="0.5" y="0.5" width="19" height="15" fill="#d8d8d8" stroke="#9a9a9a"/><rect x="3.5" y="2" width="13" height="12" fill="#f0f0f0"/><g fill="#555"><rect x="1" y="1.5" width="1.5" height="1.3"/><rect x="17.5" y="1.5" width="1.5" height="1.3"/><rect x="1" y="4.1" width="1.5" height="1.3"/><rect x="17.5" y="4.1" width="1.5" height="1.3"/><rect x="1" y="6.7" width="1.5" height="1.3"/><rect x="17.5" y="6.7" width="1.5" height="1.3"/><rect x="1" y="9.3" width="1.5" height="1.3"/><rect x="17.5" y="9.3" width="1.5" height="1.3"/><rect x="1" y="11.9" width="1.5" height="1.3"/><rect x="17.5" y="11.9" width="1.5" height="1.3"/></g><circle cx="7.5" cy="6" r="2.6" fill="#3d8fe8"/><polygon points="10,4 16,4 15,10" fill="#e0463a"/><polygon points="8.5,7 12,12.5 5,12.5" fill="#3aa64a"/><rect x="4" y="13" width="12" height="1.4" fill="#888"/></svg>
<div class="t" style="left:44px;top:299.82px;font-size:14px;line-height:14px;color:#b4b4b4;transform:scaleX(0.9668);transform-origin:0 0;">CS-Logo Part</div>
<div style="left:172px;top:300.67px;width:12px;height:12px;background:#b09f7f;"></div>
<div class="t" style="left:196px;top:300.24px;font-size:13.5px;line-height:13.5px;color:#b4b4b4;transform:scaleX(0.7857);transform-origin:0 0;width:98.00px;text-align:justify;text-align-last:justify;">コンポジション</div>
<div class="t" style="left:347px;top:299.82px;font-size:14px;line-height:14px;color:#b4b4b4;width:14px;overflow:hidden;">23</div>
<div style="left:3px;top:317.34000000000003px;width:358px;height:22px;background:#282828;"></div>
<div style="left:3px;top:339.34000000000003px;width:358px;height:0.67px;background:#222;"></div>
<svg style="left:21px;top:320.84000000000003px;" width="20" height="16" viewBox="0 0 20 16"><rect x="0.5" y="0.5" width="19" height="15" fill="#d8d8d8" stroke="#9a9a9a"/><rect x="3.5" y="2" width="13" height="12" fill="#f0f0f0"/><g fill="#555"><rect x="1" y="1.5" width="1.5" height="1.3"/><rect x="17.5" y="1.5" width="1.5" height="1.3"/><rect x="1" y="4.1" width="1.5" height="1.3"/><rect x="17.5" y="4.1" width="1.5" height="1.3"/><rect x="1" y="6.7" width="1.5" height="1.3"/><rect x="17.5" y="6.7" width="1.5" height="1.3"/><rect x="1" y="9.3" width="1.5" height="1.3"/><rect x="17.5" y="9.3" width="1.5" height="1.3"/><rect x="1" y="11.9" width="1.5" height="1.3"/><rect x="17.5" y="11.9" width="1.5" height="1.3"/></g><circle cx="7.5" cy="6" r="2.6" fill="#3d8fe8"/><polygon points="10,4 16,4 15,10" fill="#e0463a"/><polygon points="8.5,7 12,12.5 5,12.5" fill="#3aa64a"/><rect x="4" y="13" width="12" height="1.4" fill="#888"/></svg>
<div class="t" style="left:44px;top:322.49px;font-size:14px;line-height:14px;color:#b4b4b4;transform:scaleX(0.9832);transform-origin:0 0;">CS-Logo-YouTube</div>
<div style="left:172px;top:323.34000000000003px;width:12px;height:12px;background:#b09f7f;"></div>
<div class="t" style="left:196px;top:322.91px;font-size:13.5px;line-height:13.5px;color:#b4b4b4;transform:scaleX(0.7857);transform-origin:0 0;width:98.00px;text-align:justify;text-align-last:justify;">コンポジション</div>
<div class="t" style="left:347px;top:322.49px;font-size:14px;line-height:14px;color:#b4b4b4;width:14px;overflow:hidden;">23</div>
<div style="left:3px;top:340.01px;width:358px;height:22px;background:#282828;"></div>
<div style="left:3px;top:362.01px;width:358px;height:0.67px;background:#222;"></div>
<svg style="left:24px;top:342.01px;" width="15" height="19" viewBox="0 0 15 19"><path d="M1,0.5 H10 L14.5,5 V18.5 H1 Z" fill="#f2f2f2" stroke="#bbb" stroke-width="0.8"/><path d="M10,0.5 V5 H14.5" fill="#d0d0d0" stroke="#aaa" stroke-width="0.6"/><rect x="3" y="6" width="9" height="2" fill="#9ab"/><rect x="3" y="9" width="9" height="4" fill="#6a9ed8"/><rect x="3" y="13.5" width="9" height="1.5" fill="#888"/><text x="7.5" y="17.5" font-size="4" text-anchor="middle" fill="#777" font-family="Liberation Sans">PNG</text></svg>
<div class="t" style="left:44px;top:345.16px;font-size:14px;line-height:14px;color:#b4b4b4;transform:scaleX(1.0074);transform-origin:0 0;">Curiosc...o-Alt.png</div>
<div style="left:172px;top:346.01px;width:12px;height:12px;background:#a9a8d0;"></div>
<div class="t" style="left:196px;top:345.58px;font-size:13.5px;line-height:13.5px;color:#b4b4b4;transform:scaleX(0.8313);transform-origin:0 0;width:89.02px;text-align:justify;text-align-last:justify;">PNG ファイル</div>
<div class="t" style="left:290px;top:345.16px;font-size:14px;line-height:14px;color:#b4b4b4;transform:scaleX(0.9702);transform-origin:0 0;">40 KB</div>
<div style="left:3px;top:362.68px;width:358px;height:22px;background:#282828;"></div>
<div style="left:3px;top:384.68px;width:358px;height:0.67px;background:#222;"></div>
<svg style="left:7px;top:371.68px;" width="10" height="6" viewBox="0 0 10 6"><polyline points="1,1 5.0,4.5 9,1" fill="none" stroke="#a0a0a0" stroke-width="1.4"/></svg>
<svg style="left:22px;top:366.68px;" width="18" height="15" viewBox="0 0 18 15"><path d="M0.5,2 H6 L8,4 H17.5 V14.5 H0.5 Z" fill="#9e9e9e"/><rect x="0.5" y="5" width="17" height="9.5" fill="#b4b4b4"/></svg>
<div class="t" style="left:44px;top:367.83px;font-size:14px;line-height:14px;color:#b4b4b4;transform:scaleX(0.9286);transform-origin:0 0;width:28.00px;text-align:justify;text-align-last:justify;">平面</div>
<div style="left:172px;top:368.68px;width:12px;height:12px;background:#e3d36b;"></div>
<div class="t" style="left:196px;top:368.25px;font-size:13.5px;line-height:13.5px;color:#b4b4b4;transform:scaleX(0.8571);transform-origin:0 0;width:70.00px;text-align:justify;text-align-last:justify;">フォルダー</div>
<div style="left:3px;top:385.35px;width:358px;height:22px;background:#3a3a3a;"></div>
<div style="left:3px;top:407.35px;width:358px;height:0.67px;background:#222;"></div>
<div style="left:45px;top:388.85px;width:17px;height:17px;background:#7ff84f;box-shadow:0 0 0 1px #111;"></div>
<div style="left:63.5px;top:386.85px;width:99.5px;height:23px;background:#a6a6a6;"></div>
<div class="t" style="left:67px;top:390.92px;font-size:13.5px;line-height:13.5px;color:#1e1e1e;transform:scaleX(0.8585);transform-origin:0 0;width:99.02px;text-align:justify;text-align-last:justify;">グリーン 平面 1</div>
<div style="left:172px;top:391.35px;width:12px;height:12px;background:#a84343;"></div>
<div class="t" style="left:196px;top:390.92px;font-size:13.5px;line-height:13.5px;color:#b4b4b4;transform:scaleX(0.9286);transform-origin:0 0;width:28.00px;text-align:justify;text-align-last:justify;">平面</div>
<div style="left:3px;top:408.02px;width:358px;height:22px;background:#282828;"></div>
<div style="left:3px;top:430.02px;width:358px;height:0.67px;background:#222;"></div>
<div style="left:45px;top:413.02px;width:16px;height:16px;background:#eeeeee;"></div>
<div class="t" style="left:66px;top:413.59px;font-size:13.5px;line-height:13.5px;color:#b4b4b4;transform:scaleX(0.8484);transform-origin:0 0;width:99.02px;text-align:justify;text-align-last:justify;">ホワイト 平面 1</div>
<div style="left:172px;top:414.02px;width:12px;height:12px;background:#a84343;"></div>
<div class="t" style="left:196px;top:413.59px;font-size:13.5px;line-height:13.5px;color:#b4b4b4;transform:scaleX(0.9286);transform-origin:0 0;width:28.00px;text-align:justify;text-align-last:justify;">平面</div>
<svg style="left:362px;top:276px;" width="17" height="16" viewBox="0 0 17 16"><rect x="6" y="1" width="5" height="4" fill="#c0c0c0"/><rect x="8" y="5" width="1.2" height="3" fill="#c0c0c0"/><rect x="2" y="7.5" width="13" height="1.2" fill="#c0c0c0"/><rect x="2" y="7.5" width="1.2" height="3" fill="#c0c0c0"/><rect x="14" y="7.5" width="1.2" height="3" fill="#c0c0c0"/><rect x="0" y="10.5" width="5" height="4.5" fill="#c0c0c0"/><rect x="6" y="10.5" width="5" height="4.5" fill="#c0c0c0"/><rect x="12" y="10.5" width="5" height="4.5" fill="#c0c0c0"/></svg>
<div style="left:32px;top:378px;width:141px;height:37px;background:transparent;box-sizing:border-box;border:6px solid #e8452a;box-shadow:inset 0 0 0 1px #111;"></div>
<div style="left:3px;top:842px;width:208px;height:1px;background:#151515;"></div>
<div style="left:211px;top:842px;width:150px;height:21px;background:#1f1f1f;"></div>
<svg style="left:6px;top:847px;" width="22" height="14" viewBox="0 0 22 14"><rect x="5" y="1" width="16" height="9" fill="none" stroke="#aaa" stroke-width="1.4"/><rect x="8" y="4" width="10" height="2" fill="#aaa"/><rect x="1" y="5" width="3" height="8" fill="#aaa"/><rect x="5" y="11" width="3" height="2" fill="#aaa"/><rect x="10" y="11" width="3" height="2" fill="#aaa"/></svg>
<svg style="left:37px;top:847px;" width="18" height="13" viewBox="0 0 18 13"><path d="M0.5,1 H6 L8,3 H17.5 V12.5 H0.5 Z" fill="#a8a8a8"/></svg>
<svg style="left:65px;top:846px;" width="20" height="16" viewBox="0 0 20 16"><rect x="0.5" y="0.5" width="19" height="15" fill="#d8d8d8" stroke="#9a9a9a"/><rect x="3.5" y="2" width="13" height="12" fill="#f0f0f0"/><g fill="#555"><rect x="1" y="1.5" width="1.5" height="1.3"/><rect x="17.5" y="1.5" width="1.5" height="1.3"/><rect x="1" y="4.1" width="1.5" height="1.3"/><rect x="17.5" y="4.1" width="1.5" height="1.3"/><rect x="1" y="6.7" width="1.5" height="1.3"/><rect x="17.5" y="6.7" width="1.5" height="1.3"/><rect x="1" y="9.3" width="1.5" height="1.3"/><rect x="17.5" y="9.3" width="1.5" height="1.3"/><rect x="1" y="11.9" width="1.5" height="1.3"/><rect x="17.5" y="11.9" width="1.5" height="1.3"/></g><circle cx="7.5" cy="6" r="2.6" fill="#3d8fe8"/><polygon points="10,4 16,4 15,10" fill="#e0463a"/><polygon points="8.5,7 12,12.5 5,12.5" fill="#3aa64a"/><rect x="4" y="13" width="12" height="1.4" fill="#888"/></svg>
<svg style="left:96px;top:845px;" width="18" height="17" viewBox="0 0 18 17"><path d="M17,1 Q6,3 2,13 L4,15 Q8,9 17,1 Z" fill="#b0b0b0"/><path d="M13,4 Q9,10 3,14 L1,16" fill="none" stroke="#b0b0b0" stroke-width="1.5"/></svg>
<div style="left:123px;top:845px;width:58px;height:17px;background:#1b1b1b;border-radius:2px;"></div>
<div class="t" style="left:138px;top:849.19px;font-size:11px;line-height:11px;color:#b0b0b0;transform:scaleX(1.0406);transform-origin:0 0;">8 bpc</div>
<svg style="left:189px;top:845px;" width="14" height="17" viewBox="0 0 14 17"><rect x="1" y="2" width="12" height="1.5" fill="#aaa"/><rect x="5" y="0" width="4" height="2" fill="#aaa"/><rect x="2.5" y="4" width="9" height="12" fill="none" stroke="#aaa" stroke-width="1.3"/><rect x="5" y="6" width="1.1" height="8" fill="#aaa"/><rect x="8" y="6" width="1.1" height="8" fill="#aaa"/></svg>
<div style="left:213px;top:845px;width:46px;height:16px;background:#333;border-radius:8px;"></div>
<div class="t" style="left:1756px;top:63.07px;font-size:13.5px;line-height:13.5px;color:#a8a8a8;transform:scaleX(0.9286);transform-origin:0 0;width:28.00px;text-align:justify;text-align-last:justify;">情報</div>
<div class="t" style="left:1756px;top:98.77px;font-size:13.5px;line-height:13.5px;color:#a8a8a8;transform:scaleX(0.9000);transform-origin:0 0;width:70.00px;text-align:justify;text-align-last:justify;">オーディオ</div>
<div class="t" style="left:1756px;top:134.47px;font-size:13.5px;line-height:13.5px;color:#a8a8a8;transform:scaleX(0.9143);transform-origin:0 0;width:70.00px;text-align:justify;text-align-last:justify;">プレビュー</div>
<div class="t" style="left:1756px;top:170.17px;font-size:13.5px;line-height:13.5px;color:#a8a8a8;transform:scaleX(0.9221);transform-origin:0 0;width:154.00px;text-align:justify;text-align-last:justify;">エフェクト＆プリセット</div>
<div class="t" style="left:1756px;top:205.87px;font-size:13.5px;line-height:13.5px;color:#a8a8a8;transform:scaleX(0.8929);transform-origin:0 0;width:28.00px;text-align:justify;text-align-last:justify;">整列</div>
<div class="t" style="left:1756px;top:241.57px;font-size:13.5px;line-height:13.5px;color:#a8a8a8;transform:scaleX(0.8579);transform-origin:0 0;width:93.25px;text-align:justify;text-align-last:justify;">CC ライブラリ</div>
<div class="t" style="left:1756px;top:277.27px;font-size:13.5px;line-height:13.5px;color:#a8a8a8;transform:scaleX(0.9143);transform-origin:0 0;width:70.00px;text-align:justify;text-align-last:justify;">トラッカー</div>
<div class="t" style="left:1756px;top:312.97px;font-size:13.5px;line-height:13.5px;color:#a8a8a8;transform:scaleX(0.9235);transform-origin:0 0;width:196.00px;text-align:justify;text-align-last:justify;">コンテンツに応じた塗りつぶし</div>
<div class="t" style="left:1756px;top:348.67px;font-size:13.5px;line-height:13.5px;color:#a8a8a8;transform:scaleX(0.9000);transform-origin:0 0;width:70.00px;text-align:justify;text-align-last:justify;">スムーザー</div>
<div class="t" style="left:1756px;top:384.37px;font-size:13.5px;line-height:13.5px;color:#a8a8a8;transform:scaleX(0.9048);transform-origin:0 0;width:42.00px;text-align:justify;text-align-last:justify;">ブラシ</div>
<div class="t" style="left:1756px;top:420.07px;font-size:13.5px;line-height:13.5px;color:#a8a8a8;transform:scaleX(0.8929);transform-origin:0 0;width:56.00px;text-align:justify;text-align-last:justify;">ペイント</div>
<div class="t" style="left:1756px;top:455.77px;font-size:13.5px;line-height:13.5px;color:#a8a8a8;transform:scaleX(0.9286);transform-origin:0 0;width:28.00px;text-align:justify;text-align-last:justify;">段落</div>
<div style="left:1743px;top:85.0px;width:240px;height:2.2px;background:#171717;"></div>
<div style="left:1743px;top:120.59px;width:240px;height:2.2px;background:#171717;"></div>
<div style="left:1743px;top:156.18px;width:240px;height:2.2px;background:#171717;"></div>
<div style="left:1743px;top:191.77px;width:240px;height:2.2px;background:#171717;"></div>
<div style="left:1743px;top:227.36px;width:240px;height:2.2px;background:#171717;"></div>
<div style="left:1743px;top:262.95000000000005px;width:240px;height:2.2px;background:#171717;"></div>
<div style="left:1743px;top:298.54px;width:240px;height:2.2px;background:#171717;"></div>
<div style="left:1743px;top:334.13px;width:240px;height:2.2px;background:#171717;"></div>
<div style="left:1743px;top:369.72px;width:240px;height:2.2px;background:#171717;"></div>
<div style="left:1743px;top:405.31000000000006px;width:240px;height:2.2px;background:#171717;"></div>
<div style="left:1743px;top:440.90000000000003px;width:240px;height:2.2px;background:#171717;"></div>
<div style="left:1743px;top:476.49px;width:240px;height:2.2px;background:#171717;"></div>
<div class="t" style="left:1756px;top:491.57px;font-size:13.5px;line-height:13.5px;color:#c4c4c4;transform:scaleX(0.9286);transform-origin:0 0;width:28.00px;text-align:justify;text-align-last:justify;">文字</div>
<div style="left:1962px;top:494px;width:10px;height:2px;background:#b8b8b8;"></div>
<div style="left:1962px;top:498px;width:10px;height:2px;background:#b8b8b8;"></div>
<div style="left:1962px;top:502px;width:10px;height:2px;background:#b8b8b8;"></div>
<div style="left:1748px;top:524px;width:145px;height:22px;background:#171717;border-radius:3px;box-shadow:0 0 0 1px #2a2a2a;"></div>
<div style="left:1872px;top:524px;width:1px;height:22px;background:#2c2c2c;"></div>
<div class="t" style="left:1756px;top:530.00px;font-size:13px;line-height:13px;color:#c8c8c8;transform:scaleX(0.9763);transform-origin:0 0;width:64.53px;text-align:justify;text-align-last:justify;">VDL ロゴG</div>
<svg style="left:1877px;top:532px;" width="11" height="7" viewBox="0 0 11 7"><polyline points="1,1 5.5,5.5 10,1" fill="none" stroke="#b5b5b5" stroke-width="1.4"/></svg>
<div style="left:1748px;top:553px;width:145px;height:21px;background:#171717;border-radius:3px;box-shadow:0 0 0 1px #2a2a2a;"></div>
<div style="left:1872px;top:553px;width:1px;height:21px;background:#2c2c2c;"></div>
<div class="t" style="left:1759px;top:558.84px;font-size:12px;line-height:12px;color:#c8c8c8;">-</div>
<svg style="left:1877px;top:560px;" width="11" height="7" viewBox="0 0 11 7"><polyline points="1,1 5.5,5.5 10,1" fill="none" stroke="#b5b5b5" stroke-width="1.4"/></svg>
<svg style="left:1899px;top:526px;" width="23" height="23" viewBox="0 0 23 23"><path d="M2.5,21 L3.5,17 L12,8.5 L14.5,11 L6,19.5 Z" fill="none" stroke="#b5b5b5" stroke-width="1.5"/><path d="M11,6 L17,12 M13,8 L17.5,3.5 Q19.5,1.5 21,3 Q22.5,4.5 20.5,6.5 L16,11 Z" fill="#b5b5b5" stroke="#b5b5b5" stroke-width="1.4"/></svg>
<div style="left:1898px;top:553px;width:25px;height:21px;background:#e8e8e8;box-shadow:0 0 0 1px #555;"></div>
<div style="left:1899px;top:554px;width:23px;height:9px;background:#000;"></div>
<div style="left:1945px;top:540px;width:35px;height:35px;background:#ffffff;box-shadow:0 0 0 1px #777;"></div>
<div style="left:1952px;top:547px;width:21px;height:21px;background:#000;"></div>
<svg style="left:1945px;top:540px;" width="35" height="35" viewBox="0 0 35 35"><line x1="1" y1="34" x2="34" y2="1" stroke="#d03030" stroke-width="2"/></svg>
<div style="left:1929px;top:524px;width:34px;height:35px;background:#f8f8f8;box-shadow:0 0 0 1px #555;"></div>
<div style="left:1929px;top:561px;width:14px;height:14px;background:#f0f0f0;box-shadow:0 0 0 1px #666;"></div>
<svg style="left:1929px;top:561px;" width="14" height="14" viewBox="0 0 14 14"><line x1="1" y1="13" x2="13" y2="1" stroke="#d03030" stroke-width="1"/></svg>
<svg style="left:1964px;top:526px;" width="15" height="14" viewBox="0 0 15 14"><path d="M2,6 Q2,2 8,2 H11 M9,0 L12,2.3 L9,4.6 M13,8 Q13,12 8,12" fill="none" stroke="#c8c8c8" stroke-width="1.5"/></svg>
<div style="left:1748px;top:582px;width:235px;height:1px;background:#2e2e2e;"></div>
<svg style="left:1747px;top:588px;" width="22" height="18" viewBox="0 0 22 18"><text x="0" y="17" font-family="Liberation Serif" font-weight="bold" font-size="14" fill="#b8b8b8">T</text><text x="8" y="16" font-family="Liberation Serif" font-weight="bold" font-size="20" fill="#b8b8b8">T</text></svg>
<div class="t" style="left:1777px;top:590.92px;font-size:12.5px;line-height:12.5px;color:#4b9ff2;transform:scaleX(1.0070);transform-origin:0 0;">68</div>
<div class="t" style="left:1794px;top:590.92px;font-size:12.5px;line-height:12.5px;color:#a8a8a8;transform:scaleX(0.9848);transform-origin:0 0;">px</div>
<svg style="left:1858px;top:592px;" width="9" height="8" viewBox="0 0 9 8"><polygon points="0.5,0.5 8.5,0.5 4.5,7.5" fill="#a8a8a8"/></svg>
<svg style="left:1872px;top:586px;" width="24" height="22" viewBox="0 0 24 22"><text x="8" y="9" font-family="Liberation Sans" font-size="10" fill="#b8b8b8">A</text><text x="8" y="21" font-family="Liberation Sans" font-size="10" fill="#b8b8b8">A</text><line x1="7" y1="10.5" x2="22" y2="10.5" stroke="#b8b8b8" stroke-width="1"/><path d="M3,8 V20 M1,10 L3,8 L5,10 M1,18 L3,20 L5,18" fill="none" stroke="#b8b8b8" stroke-width="1.2"/></svg>
<div class="t" style="left:1911px;top:590.50px;font-size:13px;line-height:13px;color:#4b9ff2;transform:scaleX(1.0000);transform-origin:0 0;width:26.00px;text-align:justify;text-align-last:justify;">自動</div>
<svg style="left:1965px;top:592px;" width="9" height="8" viewBox="0 0 9 8"><polygon points="0.5,0.5 8.5,0.5 4.5,7.5" fill="#a8a8a8"/></svg>
<svg style="left:1746px;top:612px;" width="24" height="22" viewBox="0 0 24 22"><text x="0" y="15" font-family="Liberation Sans" font-size="16" fill="#b0b0b0" letter-spacing="-3">VA</text><path d="M10,19 H20 M12,17 L10,19 L12,21" fill="none" stroke="#b0b0b0" stroke-width="1.2"/></svg>
<div class="t" style="left:1777px;top:615.84px;font-size:12px;line-height:12px;color:#777;">-</div>
<svg style="left:1858px;top:617px;" width="9" height="8" viewBox="0 0 9 8"><polygon points="0.5,0.5 8.5,0.5 4.5,7.5" fill="#a8a8a8"/></svg>
<svg style="left:1872px;top:612px;" width="25" height="22" viewBox="0 0 25 22"><rect x="1" y="1" width="23" height="13" fill="#b8b8b8"/><text x="2.5" y="13" font-family="Liberation Sans" font-weight="bold" font-size="13" fill="#232323" letter-spacing="-1.5">VA</text><path d="M2,18 H23 M5,16 L2,18 L5,20 M20,16 L23,18 L20,20" fill="none" stroke="#b8b8b8" stroke-width="1.2"/></svg>
<div class="t" style="left:1911px;top:615.92px;font-size:12.5px;line-height:12.5px;color:#4b9ff2;">0</div>
<svg style="left:1965px;top:617px;" width="9" height="8" viewBox="0 0 9 8"><polygon points="0.5,0.5 8.5,0.5 4.5,7.5" fill="#a8a8a8"/></svg>
<div style="left:1748px;top:641px;width:235px;height:1px;background:#2e2e2e;"></div>
<svg style="left:1748px;top:651px;" width="21" height="16" viewBox="0 0 21 16"><rect x="0" y="1" width="21" height="2.5" fill="#b8b8b8"/><rect x="0" y="7" width="21" height="2.5" fill="#b8b8b8"/><rect x="0" y="13" width="21" height="2.5" fill="#b8b8b8"/></svg>
<div class="t" style="left:1777px;top:652.92px;font-size:12.5px;line-height:12.5px;color:#a8a8a8;transform:scaleX(1.0079);transform-origin:0 0;">- px</div>
<div style="left:1778px;top:660px;width:5px;height:1.3px;background:#4b9ff2;"></div>
<svg style="left:1830px;top:654px;" width="9" height="8" viewBox="0 0 9 8"><polygon points="0.5,0.5 8.5,0.5 4.5,7.5" fill="#a8a8a8"/></svg>
<div style="left:1845px;top:648px;width:138px;height:21px;background:#1c1c1c;border-radius:3px;"></div>
<svg style="left:1962px;top:656px;" width="11" height="7" viewBox="0 0 11 7"><polyline points="1,1 5.5,5.5 10,1" fill="none" stroke="#b5b5b5" stroke-width="1.4"/></svg>
<div style="left:1748px;top:678px;width:235px;height:1px;background:#2e2e2e;"></div>
<svg style="left:1747px;top:686px;" width="24" height="20" viewBox="0 0 24 20"><path d="M4,2 V18 M1,5 L4,2 L7,5 M1,15 L4,18 L7,15" fill="none" stroke="#b8b8b8" stroke-width="1.4"/><text x="7" y="17" font-family="Liberation Serif" font-weight="bold" font-size="20" fill="#b8b8b8">T</text></svg>
<div class="t" style="left:1777px;top:689.42px;font-size:12.5px;line-height:12.5px;color:#4b9ff2;transform:scaleX(0.9591);transform-origin:0 0;">100</div>
<div class="t" style="left:1800px;top:689.42px;font-size:12.5px;line-height:12.5px;color:#a8a8a8;">%</div>
<svg style="left:1830px;top:690px;" width="9" height="8" viewBox="0 0 9 8"><polygon points="0.5,0.5 8.5,0.5 4.5,7.5" fill="#a8a8a8"/></svg>
<svg style="left:1872px;top:686px;" width="24" height="22" viewBox="0 0 24 22"><text x="3" y="15" font-family="Liberation Serif" font-weight="bold" font-size="20" fill="#b8b8b8">T</text><path d="M2,19 H22 M5,17 L2,19 L5,21 M19,17 L22,19 L19,21" fill="none" stroke="#b8b8b8" stroke-width="1.2"/></svg>
<div class="t" style="left:1911px;top:690.42px;font-size:12.5px;line-height:12.5px;color:#4b9ff2;transform:scaleX(0.9591);transform-origin:0 0;">100</div>
<div class="t" style="left:1934px;top:690.42px;font-size:12.5px;line-height:12.5px;color:#a8a8a8;">%</div>
<svg style="left:1965px;top:691px;" width="9" height="8" viewBox="0 0 9 8"><polygon points="0.5,0.5 8.5,0.5 4.5,7.5" fill="#a8a8a8"/></svg>
<svg style="left:1747px;top:710px;" width="24" height="22" viewBox="0 0 24 22"><text x="0" y="15" font-family="Liberation Sans" font-size="15" fill="#b8b8b8">A</text><text x="11" y="11" font-family="Liberation Sans" font-size="10" fill="#b8b8b8">a</text><rect x="0" y="17" width="12" height="1" fill="#b8b8b8"/><path d="M15,21 V13 M13,15 L15,13 L17,15" fill="none" stroke="#b8b8b8" stroke-width="1.2"/></svg>
<div class="t" style="left:1777px;top:714.42px;font-size:12.5px;line-height:12.5px;color:#4b9ff2;">0</div>
<div class="t" style="left:1787px;top:714.42px;font-size:12.5px;line-height:12.5px;color:#a8a8a8;transform:scaleX(0.9848);transform-origin:0 0;">px</div>
<svg style="left:1830px;top:715px;" width="9" height="8" viewBox="0 0 9 8"><polygon points="0.5,0.5 8.5,0.5 4.5,7.5" fill="#a8a8a8"/></svg>
<svg style="left:1872px;top:710px;" width="24" height="24" viewBox="0 0 24 24"><rect x="4" y="1" width="16" height="15" fill="none" stroke="#b8b8b8" stroke-width="1" stroke-dasharray="1.5,1.5"/><text x="6" y="13" font-size="11" fill="#b8b8b8">あ</text><path d="M2,20 H9 M7,18 L9,20 L7,22 M22,20 H15 M17,18 L15,20 L17,22" fill="none" stroke="#b8b8b8" stroke-width="1.1"/></svg>
<div class="t" style="left:1911px;top:714.42px;font-size:12.5px;line-height:12.5px;color:#4b9ff2;">0</div>
<div class="t" style="left:1920px;top:714.42px;font-size:12.5px;line-height:12.5px;color:#a8a8a8;">%</div>
<svg style="left:1965px;top:715px;" width="9" height="8" viewBox="0 0 9 8"><polygon points="0.5,0.5 8.5,0.5 4.5,7.5" fill="#a8a8a8"/></svg>
<div style="left:1748px;top:741px;width:235px;height:1px;background:#2e2e2e;"></div>
<svg style="left:1770px;top:748px;" width="200" height="20" viewBox="0 0 200 20"><text x='7' y='17' font-size='18' font-family='Liberation Serif' font-weight='bold' fill='#b8b8b8'>T</text><text x='37' y='17' font-size='18' font-style='italic' font-family='Liberation Serif' font-weight='bold' fill='#b8b8b8'>T</text><text x='69' y='17' font-size='17' font-family='Liberation Serif' font-weight='bold' fill='#b8b8b8' letter-spacing='-1'>TT</text><text x='99' y='17' font-size='17' font-family='Liberation Serif' font-weight='bold' fill='#b8b8b8'>T</text><text x='110' y='17' font-size='12' font-family='Liberation Serif' font-weight='bold' fill='#b8b8b8'>T</text><text x='137' y='17' font-size='17' font-family='Liberation Serif' font-weight='bold' fill='#b8b8b8'>T</text><text x='149' y='8' font-size='8' font-family='Liberation Serif' font-weight='bold' fill='#b8b8b8'>1</text><text x='167' y='17' font-size='17' font-family='Liberation Serif' font-weight='bold' fill='#b8b8b8'>T</text><text x='179' y='19' font-size='8' font-family='Liberation Serif' font-weight='bold' fill='#b8b8b8'>1</text></svg>
<div style="left:1755px;top:782px;width:17px;height:17px;background:transparent;box-sizing:border-box;border:2.4px solid #9a9a9a;border-radius:3px;"></div>
<div class="t" style="left:1775px;top:784.00px;font-size:13px;line-height:13px;color:#a8a8a8;transform:scaleX(1.0000);transform-origin:0 0;width:26.00px;text-align:justify;text-align-last:justify;">合字</div>
<div style="left:1871px;top:782px;width:17px;height:17px;background:transparent;box-sizing:border-box;border:2.4px solid #9a9a9a;border-radius:3px;"></div>
<div class="t" style="left:1892px;top:784.00px;font-size:13px;line-height:13px;color:#a8a8a8;transform:scaleX(0.9780);transform-origin:0 0;width:91.00px;text-align:justify;text-align-last:justify;">ヒンディー数字</div>
<div class="t" style="left:38px;top:879.15px;font-size:14px;line-height:14px;color:#9c9c9c;transform:scaleX(0.8571);transform-origin:0 0;width:98.00px;text-align:justify;text-align-last:justify;">レンダーキュー</div>
<svg style="left:169px;top:882px;" width="9" height="9" viewBox="0 0 9 9"><line x1="1" y1="1" x2="8" y2="8" stroke="#aaa" stroke-width="1.2"/><line x1="8" y1="1" x2="1" y2="8" stroke="#aaa" stroke-width="1.2"/></svg>
<div style="left:188px;top:878px;width:12px;height:12px;background:#b09f7f;box-shadow:0 1px 0 #0a1030;"></div>
<div class="t" style="left:213px;top:880.07px;font-size:13.5px;line-height:13.5px;color:#cccccc;transform:scaleX(0.8392);transform-origin:0 0;">CS-Logo-YouTube</div>
<div style="left:316px;top:883px;width:11px;height:2px;background:#b0b0b0;"></div>
<div style="left:316px;top:887px;width:11px;height:2px;background:#b0b0b0;"></div>
<div style="left:316px;top:891px;width:11px;height:2px;background:#b0b0b0;"></div>
<div style="left:170px;top:897px;width:158px;height:3px;background:#c4c4c4;border-radius:2px;"></div>
<div style="left:370px;top:878px;width:13px;height:12px;background:#b09f7f;"></div>
<div class="t" style="left:395px;top:880.07px;font-size:13.5px;line-height:13.5px;color:#a8a8a8;transform:scaleX(0.8559);transform-origin:0 0;">CS-Logo Part</div>
<div class="t" style="left:35px;top:908.61px;font-size:17px;line-height:17px;color:#4ea4f7;font-weight:bold;transform:scaleX(1.0462);transform-origin:0 0;">0:00:00:05</div>
<div class="t" style="left:14px;top:928.15px;font-size:14px;line-height:14px;color:#3580d0;transform:scaleX(1.0977);transform-origin:0 0;-webkit-text-stroke:0;">00005 (23.976 fps)</div>
<div style="left:158px;top:912px;width:587px;height:22px;background:#171717;border-radius:3px;box-shadow:0 0 0 1px #262626;"></div>
<svg style="left:165px;top:915px;" width="22" height="16" viewBox="0 0 22 16"><circle cx="9" cy="6" r="4.3" fill="none" stroke="#c0c0c0" stroke-width="1.5"/><line x1="5.8" y1="9.2" x2="1.5" y2="13.5" stroke="#c0c0c0" stroke-width="1.6"/><polygon points="13,9 19,9 16,12" fill="#c0c0c0"/></svg>
<svg style="left:764px;top:914px;" width="20" height="19" viewBox="0 0 20 19"><rect x="0" y="3" width="4" height="2" fill="#b8b8b8"/><rect x="4" y="1" width="6" height="6" fill="#b8b8b8"/><path d="M10,4 H13 M11,4 V15 M11,9 H14 M11,14 H14" stroke="#b8b8b8" stroke-width="1.3" fill="none"/><rect x="14" y="7" width="5" height="4" fill="#b8b8b8"/><rect x="14" y="12" width="5" height="3" fill="#b8b8b8"/><polygon points="15,16 20,16 17.5,18.5" fill="#b8b8b8"/></svg>
<svg style="left:803px;top:912px;" width="22" height="22" viewBox="0 0 22 22"><path d="M5,1 V9 M1,5 H9 M2,2 L8,8 M8,2 L2,8" stroke="#b8b8b8" stroke-width="1.4"/><path d="M8,12 L14,9 L20,12 V18 L14,21 L8,18 Z" fill="none" stroke="#b8b8b8" stroke-width="1.5"/><path d="M8,12 L14,15 L20,12 M14,15 V21" fill="none" stroke="#b8b8b8" stroke-width="1.3"/></svg>
<svg style="left:845px;top:914px;" width="19" height="18" viewBox="0 0 19 18"><path d="M3,9 Q3,1 9.5,1 Q16,1 16,9 Z" fill="#b8b8b8"/><circle cx="7" cy="5" r="1.2" fill="#232323"/><circle cx="12" cy="5" r="1.2" fill="#232323"/><rect x="8.5" y="9" width="2" height="4" fill="#b8b8b8"/><rect x="0" y="12" width="19" height="5" fill="#8a8a8a"/></svg>
<svg style="left:876px;top:913px;" width="19" height="20" viewBox="0 0 19 20"><rect x="5" y="1" width="13" height="14" fill="none" stroke="#b8b8b8" stroke-width="1.3"/><rect x="3" y="3" width="13" height="14" fill="#232323" stroke="#b8b8b8" stroke-width="1.3"/><rect x="1" y="5" width="13" height="14" fill="#232323" stroke="#b8b8b8" stroke-width="1.3"/><rect x="5" y="10" width="5" height="2" fill="#b8b8b8"/></svg>
<svg style="left:906px;top:913px;" width="22" height="20" viewBox="0 0 22 20"><ellipse cx="8" cy="14" rx="6.5" ry="5" fill="none" stroke="#3d8fe8" stroke-width="1.6"/><ellipse cx="11" cy="11" rx="6.5" ry="5.5" fill="#232323" stroke="#3d8fe8" stroke-width="1.6"/><circle cx="14" cy="7.5" r="6" fill="#2f6fb8" stroke="#3d8fe8" stroke-width="1.6"/></svg>
<svg style="left:946px;top:912px;" width="22" height="21" viewBox="0 0 22 21"><rect x="2" y="3" width="18" height="16" fill="none" stroke="#b8b8b8" stroke-width="1.5"/><path d="M5,15 Q8,15 10,11 Q12,6 17,6" fill="none" stroke="#b8b8b8" stroke-width="1.4"/><rect x="4" y="0.5" width="1.2" height="3" fill="#b8b8b8"/><rect x="7" y="0.5" width="1.2" height="3" fill="#b8b8b8"/><rect x="10" y="0.5" width="1.2" height="3" fill="#b8b8b8"/><rect x="13" y="0.5" width="1.2" height="3" fill="#b8b8b8"/><rect x="16" y="0.5" width="1.2" height="3" fill="#b8b8b8"/></svg>
<div style="left:2px;top:944px;width:984px;height:1px;background:#121212;"></div>
<div style="left:2px;top:945px;width:984px;height:22px;background:#2f2f2f;"></div>
<div style="left:2px;top:967px;width:1998px;height:1px;background:#121212;"></div>
<svg style="left:8px;top:950px;" width="16" height="11" viewBox="0 0 16 11"><path d="M1,5.5 Q8,-1.5 15,5.5 Q8,12.5 1,5.5 Z" fill="#c8c8c8"/><circle cx="8" cy="5.5" r="2.6" fill="#2a2a2a"/><circle cx="8.6" cy="4.9" r="1.1" fill="#c8c8c8"/></svg>
<svg style="left:26px;top:949px;" width="15" height="14" viewBox="0 0 15 14"><polygon points="1,5 4,5 8,1 8,13 4,9 1,9" fill="#b8b8b8"/><path d="M10,4 Q12,7 10,10 M12,2 Q15.5,7 12,12" fill="none" stroke="#b8b8b8" stroke-width="1.3"/></svg>
<div style="left:44px;top:952px;width:8px;height:8px;background:#b8b8b8;border-radius:50%;"></div>
<svg style="left:62px;top:948px;" width="13" height="15" viewBox="0 0 13 15"><path d="M3,7 V4.5 A3.5,3.5 0 0,1 10,4.5 V7" fill="none" stroke="#b8b8b8" stroke-width="1.6"/><rect x="1" y="7" width="11" height="7.5" rx="1" fill="#b8b8b8"/><rect x="5.8" y="9" width="1.4" height="3" fill="#2c2c2c"/></svg>
<div style="left:82px;top:950px;width:1.2px;height:13px;background:#121212;"></div>
<div style="left:121px;top:950px;width:1.2px;height:13px;background:#121212;"></div>
<div style="left:147px;top:950px;width:1.2px;height:13px;background:#121212;"></div>
<div style="left:361px;top:950px;width:1.2px;height:13px;background:#121212;"></div>
<svg style="left:98px;top:948px;" width="16" height="16" viewBox="0 0 16 16"><path d="M1,1 H8 L15,8 L8,15 L1,8 Z" fill="#b8b8b8"/><circle cx="4.5" cy="4.5" r="1.5" fill="#2b2b2b"/></svg>
<div class="t" style="left:126px;top:951.84px;font-size:12px;line-height:12px;color:#9a9a9a;">#</div>
<div class="t" style="left:155px;top:950.15px;font-size:14px;line-height:14px;color:#9e9e9e;transform:scaleX(0.9714);transform-origin:0 0;width:70.00px;text-align:justify;text-align-last:justify;">レイヤー名</div>
<div class="t" style="left:369px;top:950.15px;font-size:14px;line-height:14px;color:#9e9e9e;transform:scaleX(0.9762);transform-origin:0 0;width:42.00px;text-align:justify;text-align-last:justify;">モード</div>
<div class="t" style="left:458px;top:951.00px;font-size:13px;line-height:13px;color:#9e9e9e;">T</div>
<div class="t" style="left:479px;top:951.84px;font-size:12px;line-height:12px;color:#9e9e9e;transform:scaleX(0.6494);transform-origin:0 0;width:77.00px;text-align:justify;text-align-last:justify;letter-spacing:-1px;">トラックマット</div>
<div style="left:560px;top:950px;width:1.2px;height:13px;background:#121212;"></div>
<svg style="left:566px;top:950px;" width="16" height="14" viewBox="0 0 16 14"><path d="M2,8 Q2,1 8,1 Q14,1 14,8 Z" fill="#b8b8b8"/><circle cx="6" cy="5" r="1" fill="#2a2a2a"/><circle cx="10" cy="5" r="1" fill="#2a2a2a"/><rect x="7" y="8" width="2" height="4" fill="#b8b8b8"/><rect x="0" y="10" width="16" height="1.6" fill="#b8b8b8"/></svg>
<svg style="left:585px;top:950px;" width="14" height="14" viewBox="0 0 14 14"><circle cx="7" cy="7" r="3" fill="none" stroke="#b8b8b8" stroke-width="1.5"/><line x1="11.0" y1="7.0" x2="13.5" y2="7.0" stroke="#b8b8b8" stroke-width="1.4"/><line x1="9.829553076668798" y1="9.827300724421464" x2="11.598023749586797" y2="11.594363677184878" stroke="#b8b8b8" stroke-width="1.4"/><line x1="7.003185306842933" y1="10.999998731727338" x2="7.0051761236197665" y2="13.499997939056925" stroke="#b8b8b8" stroke-width="1.4"/><line x1="4.174953420719979" y1="9.83180363459373" x2="2.409299308669966" y2="11.60168090621481" stroke="#b8b8b8" stroke-width="1.4"/><line x1="3.000005073089842" y1="7.006370611665948" x2="0.500008243770993" y2="7.010352243957164" stroke="#b8b8b8" stroke-width="1.4"/><line x1="4.165947603230909" y1="4.1772093573260936" x2="2.3946648552502268" y2="2.412965205654901" stroke="#b8b8b8" stroke-width="1.4"/><line x1="6.990444087550874" y1="3.000011414449128" x2="6.98447164227017" y2="0.500018548479833" stroke="#b8b8b8" stroke-width="1.4"/><line x1="9.820532916033692" y1="4.163700638231132" x2="11.583365988554748" y2="2.391013537125591" stroke="#b8b8b8" stroke-width="1.4"/></svg>
<svg style="left:601px;top:950px;" width="15" height="14" viewBox="0 0 15 14"><line x1="1" y1="1" x2="14" y2="13" stroke="#b8b8b8" stroke-width="1.6" stroke-dasharray="2,1"/></svg>
<div class="t" style="left:619px;top:949.30px;font-size:15px;line-height:15px;color:#b8b8b8;font-family:'Liberation Serif',serif;"><i>fx</i></div>
<svg style="left:637px;top:949px;" width="15" height="15" viewBox="0 0 15 15"><rect x="1" y="1" width="13" height="13" fill="none" stroke="#b8b8b8" stroke-width="1.3"/><rect x="4" y="1" width="7" height="13" fill="#b8b8b8"/><rect x="5" y="6" width="5" height="2" fill="#2c2c2c"/></svg>
<svg style="left:655px;top:949px;" width="16" height="16" viewBox="0 0 16 16"><circle cx="6" cy="11" r="4.3" fill="#777" stroke="#9a9a9a" stroke-width="1"/><circle cx="8" cy="8.5" r="4.3" fill="#888" stroke="#9a9a9a" stroke-width="1"/><circle cx="10" cy="6" r="4.6" fill="#8a8a8a" stroke="#aaa" stroke-width="1.2"/></svg>
<svg style="left:673px;top:949px;" width="15" height="15" viewBox="0 0 15 15"><circle cx="7.5" cy="7.5" r="6.5" fill="#b8b8b8"/><path d="M12,3 L3,12 A6.5,6.5 0 0,0 12,3 Z" fill="#2c2c2c"/></svg>
<svg style="left:690px;top:948px;" width="16" height="17" viewBox="0 0 16 17"><path d="M8,1 L15,4.5 V12.5 L8,16 L1,12.5 V4.5 Z M1,4.5 L8,8 L15,4.5 M8,8 V16" fill="none" stroke="#b8b8b8" stroke-width="1.4"/></svg>
<div style="left:756px;top:950px;width:1.2px;height:13px;background:#121212;"></div>
<div class="t" style="left:762px;top:950.15px;font-size:14px;line-height:14px;color:#9e9e9e;transform:scaleX(1.0143);transform-origin:0 0;width:70.00px;text-align:justify;text-align-last:justify;">親とリンク</div>
<div style="left:967px;top:950px;width:1.2px;height:13px;background:#121212;"></div>
<div style="left:2px;top:967.5px;width:984px;height:22px;background:#323232;"></div>
<div style="left:2px;top:989.5px;width:1998px;height:0.7px;background:#1c1c1c;"></div>
<div style="left:8px;top:971.5px;width:15px;height:15px;background:#1e1e1e;"></div>
<div style="left:61px;top:971.5px;width:15px;height:15px;background:#1e1e1e;"></div>
<svg style="left:90px;top:973.5px;" width="7" height="11" viewBox="0 0 7 11"><polyline points="1,1 5.5,5.5 1,10" fill="none" stroke="#b0b0b0" stroke-width="1.4"/></svg>
<div style="left:103.5px;top:970.0px;width:16.5px;height:17px;background:#6a7ee0;box-shadow:0 0 0 1px #1a2a2a;"></div>
<div class="t" style="left:128px;top:971.65px;font-size:14px;line-height:14px;color:#b4b4b4;">1</div>
<svg style="left:151px;top:970.5px;" width="16" height="16" viewBox="0 0 16 16"><polygon points="8,0.5 10,6 15.5,6 11,9.5 12.8,15 8,11.6 3.2,15 5,9.5 0.5,6 6,6" fill="#c0c0c0"/></svg>
<svg style="left:172px;top:970.5px;" width="16" height="16" viewBox="0 0 16 16"><rect x="1" y="1" width="14" height="14" fill="none" stroke="#b8b8b8" stroke-width="1.6"/><circle cx="8" cy="8" r="3.6" fill="#c8c8c8"/></svg>
<div class="t" style="left:194px;top:971.65px;font-size:14px;line-height:14px;color:#b8b8b8;transform:scaleX(1.0234);transform-origin:0 0;">Subtext-Alpha</div>
<div style="left:367px;top:969.5px;width:82px;height:19px;background:#1b1b1b;"></div>
<div class="t" style="left:374px;top:971.65px;font-size:14px;line-height:14px;color:#c0c0c0;transform:scaleX(0.9286);transform-origin:0 0;width:28.00px;text-align:justify;text-align-last:justify;">通常</div>
<svg style="left:432px;top:975.5px;" width="11" height="7" viewBox="0 0 11 7"><polyline points="1,1 5.5,5.5 10,1" fill="none" stroke="#b5b5b5" stroke-width="1.4"/></svg>
<div style="left:565px;top:970.5px;width:16px;height:16px;background:#262626;"></div>
<svg style="left:566px;top:971.5px;" width="16" height="14" viewBox="0 0 16 14"><path d="M2,8 Q2,1 8,1 Q14,1 14,8 Z" fill="#b8b8b8"/><circle cx="6" cy="5" r="1" fill="#2a2a2a"/><circle cx="10" cy="5" r="1" fill="#2a2a2a"/><rect x="7" y="8" width="2" height="4" fill="#b8b8b8"/><rect x="0" y="10" width="16" height="1.6" fill="#b8b8b8"/></svg>
<div style="left:584px;top:970.5px;width:15px;height:16px;background:#1e1e1e;"></div>
<svg style="left:585px;top:971.5px;" width="14" height="14" viewBox="0 0 14 14"><circle cx="7" cy="7" r="2.5" fill="none" stroke="#8a8a8a" stroke-width="1.2"/><line x1="10.5" y1="7.0" x2="13.0" y2="7.0" stroke="#8a8a8a" stroke-width="1.2"/><line x1="9.4758589420852" y1="9.473888133868781" x2="11.244329615003199" y2="11.240951086632196" stroke="#8a8a8a" stroke-width="1.2"/><line x1="7.002787143487566" y1="10.499998890261422" x2="7.004777960264399" y2="12.999998097591007" stroke="#8a8a8a" stroke-width="1.2"/><line x1="4.528084243129982" y1="9.477828180269512" x2="2.7624301310799684" y2="11.247705451890592" stroke="#8a8a8a" stroke-width="1.2"/><line x1="3.500004438953612" y1="7.005574285207704" x2="1.0000076096347632" y2="7.009555917498921" stroke="#8a8a8a" stroke-width="1.2"/><line x1="4.520204152827045" y1="4.530058187660332" x2="2.7489214048463637" y2="2.7658140359891394" stroke="#8a8a8a" stroke-width="1.2"/><line x1="6.991638576607015" y1="3.5000099876429873" x2="6.985666131326311" y2="1.0000171216736922" stroke="#8a8a8a" stroke-width="1.2"/><line x1="9.46796630152948" y1="4.518238058452241" x2="11.230799374050537" y2="2.7455509573466994" stroke="#8a8a8a" stroke-width="1.2"/></svg>
<div style="left:601px;top:970.5px;width:15px;height:16px;background:#1e1e1e;"></div>
<svg style="left:601px;top:971.5px;" width="15" height="15" viewBox="0 0 15 15"><line x1="2" y1="13" x2="13" y2="2" stroke="#b8b8b8" stroke-width="1.6"/></svg>
<div style="left:655px;top:970.5px;width:15px;height:16px;background:#1e1e1e;"></div>
<div style="left:690px;top:970.5px;width:15px;height:16px;background:#1e1e1e;"></div>
<svg style="left:761px;top:970.5px;" width="16" height="16" viewBox="0 0 16 16"><polyline points="7.90,7.95 7.99,7.93 8.08,7.89 8.17,7.84 8.25,7.78 8.33,7.70 8.39,7.60 8.45,7.50 8.49,7.38 8.52,7.25 8.53,7.11 8.52,6.96 8.49,6.82 8.43,6.67 8.36,6.53 8.27,6.39 8.15,6.26 8.01,6.14 7.86,6.04 7.69,5.96 7.50,5.90 7.30,5.86 7.10,5.85 6.88,5.86 6.67,5.90 6.45,5.97 6.25,6.07 6.05,6.20 5.86,6.36 5.69,6.54 5.54,6.75 5.42,6.97 5.32,7.22 5.25,7.49 5.21,7.76 5.21,8.05 5.25,8.33 5.32,8.62 5.43,8.90 5.58,9.17 5.76,9.43 5.97,9.67 6.22,9.88 6.50,10.06 6.80,10.21 7.13,10.33 7.47,10.40 7.82,10.43 8.18,10.42 8.55,10.37 8.90,10.26 9.25,10.12 9.59,9.92 9.90,9.69 10.19,9.41 10.44,9.10 10.66,8.75 10.84,8.38 10.97,7.98 11.05,7.56 11.08,7.13 11.06,6.69 10.98,6.25 10.85,5.82 10.67,5.40 10.43,5.00 10.14,4.63 9.81,4.29 9.43,4.00 9.01,3.74 8.57,3.54 8.09,3.39 7.59,3.30 7.08,3.27 6.57,3.30 6.05,3.40 5.55,3.56 5.06,3.78 4.60,4.06 4.17,4.40 3.78,4.79 3.44,5.23 3.15,5.72 2.92,6.24 2.75,6.79 2.65,7.37 2.62,7.96 2.66,8.55 2.78,9.14 2.96,9.72 3.22,10.27 3.55,10.80 3.94,11.29 4.39,11.73 4.89,12.11 5.45,12.44 6.04,12.70 6.67,12.89 7.32,13.00 7.99,13.03 8.66,12.98 9.32,12.85 9.98,12.63 10.60,12.34 11.19,11.97 11.74,11.53 12.23,11.02 12.67,10.45 13.03,9.83 13.32,9.16 13.52,8.46 13.65,7.73 13.68,6.99 13.62,6.24 13.47,5.50 13.23,4.77 12.91,4.08 12.50,3.42 12.00,2.81 11.44,2.27 10.81,1.79" fill="none" stroke="#b8b8b8" stroke-width="1.5"/></svg>
<div style="left:785px;top:969.5px;width:180px;height:19px;background:#1b1b1b;"></div>
<div class="t" style="left:791px;top:971.65px;font-size:14px;line-height:14px;color:#c0c0c0;transform:scaleX(0.8929);transform-origin:0 0;width:28.00px;text-align:justify;text-align-last:justify;">なし</div>
<svg style="left:944px;top:975.5px;" width="11" height="7" viewBox="0 0 11 7"><polyline points="1,1 5.5,5.5 10,1" fill="none" stroke="#b5b5b5" stroke-width="1.4"/></svg>
<div style="left:2px;top:990.12px;width:984px;height:22px;background:#323232;"></div>
<div style="left:2px;top:1012.12px;width:1998px;height:0.7px;background:#1c1c1c;"></div>
<svg style="left:7px;top:996.12px;" width="16" height="11" viewBox="0 0 16 11"><path d="M1,5.5 Q8,-1.5 15,5.5 Q8,12.5 1,5.5 Z" fill="#c8c8c8"/><circle cx="8" cy="5.5" r="2.6" fill="#2a2a2a"/><circle cx="8.6" cy="4.9" r="1.1" fill="#c8c8c8"/></svg>
<div style="left:42px;top:994.12px;width:15px;height:15px;background:#1e1e1e;"></div>
<div style="left:61px;top:994.12px;width:15px;height:15px;background:#1e1e1e;"></div>
<svg style="left:87px;top:999.12px;" width="11" height="7" viewBox="0 0 11 7"><polyline points="1,1 5.5,5.5 10,1" fill="none" stroke="#b0b0b0" stroke-width="1.4"/></svg>
<div style="left:103.5px;top:992.62px;width:16.5px;height:17px;background:#a9a8cf;box-shadow:0 0 0 1px #1a2a2a;"></div>
<div class="t" style="left:128px;top:994.27px;font-size:14px;line-height:14px;color:#b4b4b4;">2</div>
<svg style="left:152px;top:992.12px;" width="14" height="18" viewBox="0 0 14 18"><path d="M1,0.5 H9 L13.5,5 V17.5 H1 Z" fill="#f2f2f2" stroke="#bbb" stroke-width="0.8"/><path d="M9,0.5 V5 H13.5" fill="#d0d0d0" stroke="#aaa" stroke-width="0.6"/><rect x="3" y="6" width="8" height="2" fill="#9ab"/><rect x="3" y="9" width="8" height="4" fill="#6a9ed8"/><rect x="3" y="13.5" width="8" height="1.5" fill="#888"/><text x="7.0" y="16.5" font-size="4" text-anchor="middle" fill="#777" font-family="Liberation Sans">PNG</text></svg>
<svg style="left:172px;top:993.12px;" width="16" height="16" viewBox="0 0 16 16"><rect x="1" y="1" width="14" height="14" fill="none" stroke="#9a9a9a" stroke-width="1.6"/><circle cx="8" cy="8" r="3.6" fill="#444" stroke="#9a9a9a" stroke-width="1.2"/><g fill="#9a9a9a"><rect x="3" y="3" width="2" height="2"/><rect x="11" y="3" width="2" height="2"/><rect x="3" y="11" width="2" height="2"/><rect x="11" y="11" width="2" height="2"/></g></svg>
<div class="t" style="left:194px;top:994.27px;font-size:14px;line-height:14px;color:#b8b8b8;transform:scaleX(1.0532);transform-origin:0 0;">Subtext</div>
<div style="left:367px;top:992.12px;width:82px;height:19px;background:#1b1b1b;"></div>
<div class="t" style="left:374px;top:994.27px;font-size:14px;line-height:14px;color:#c0c0c0;transform:scaleX(0.9286);transform-origin:0 0;width:28.00px;text-align:justify;text-align-last:justify;">通常</div>
<svg style="left:432px;top:998.12px;" width="11" height="7" viewBox="0 0 11 7"><polyline points="1,1 5.5,5.5 10,1" fill="none" stroke="#b5b5b5" stroke-width="1.4"/></svg>
<div style="left:455px;top:994.12px;width:15px;height:15px;background:#1e1e1e;"></div>
<div style="left:477px;top:992.12px;width:78px;height:19px;background:#1b1b1b;"></div>
<div class="t" style="left:485px;top:994.27px;font-size:14px;line-height:14px;color:#c0c0c0;transform:scaleX(0.8810);transform-origin:0 0;width:42.00px;text-align:justify;text-align-last:justify;">アル反</div>
<svg style="left:539px;top:998.12px;" width="11" height="7" viewBox="0 0 11 7"><polyline points="1,1 5.5,5.5 10,1" fill="none" stroke="#b5b5b5" stroke-width="1.4"/></svg>
<div style="left:565px;top:993.12px;width:16px;height:16px;background:#262626;"></div>
<svg style="left:566px;top:994.12px;" width="16" height="14" viewBox="0 0 16 14"><path d="M2,8 Q2,1 8,1 Q14,1 14,8 Z" fill="#b8b8b8"/><circle cx="6" cy="5" r="1" fill="#2a2a2a"/><circle cx="10" cy="5" r="1" fill="#2a2a2a"/><rect x="7" y="8" width="2" height="4" fill="#b8b8b8"/><rect x="0" y="10" width="16" height="1.6" fill="#b8b8b8"/></svg>
<div style="left:601px;top:993.12px;width:15px;height:16px;background:#1e1e1e;"></div>
<svg style="left:601px;top:994.12px;" width="15" height="15" viewBox="0 0 15 15"><line x1="2" y1="13" x2="13" y2="2" stroke="#b8b8b8" stroke-width="1.6"/></svg>
<svg style="left:655px;top:993.12px;" width="16" height="16" viewBox="0 0 16 16"><circle cx="6" cy="11" r="4.3" fill="#777" stroke="#9a9a9a" stroke-width="1"/><circle cx="8" cy="8.5" r="4.3" fill="#888" stroke="#9a9a9a" stroke-width="1"/><circle cx="10" cy="6" r="4.6" fill="#8a8a8a" stroke="#aaa" stroke-width="1.2"/></svg>
<div style="left:673px;top:993.12px;width:15px;height:16px;background:#1e1e1e;"></div>
<div style="left:690px;top:993.12px;width:15px;height:16px;background:#1e1e1e;"></div>
<svg style="left:761px;top:993.12px;" width="16" height="16" viewBox="0 0 16 16"><polyline points="7.90,7.95 7.99,7.93 8.08,7.89 8.17,7.84 8.25,7.78 8.33,7.70 8.39,7.60 8.45,7.50 8.49,7.38 8.52,7.25 8.53,7.11 8.52,6.96 8.49,6.82 8.43,6.67 8.36,6.53 8.27,6.39 8.15,6.26 8.01,6.14 7.86,6.04 7.69,5.96 7.50,5.90 7.30,5.86 7.10,5.85 6.88,5.86 6.67,5.90 6.45,5.97 6.25,6.07 6.05,6.20 5.86,6.36 5.69,6.54 5.54,6.75 5.42,6.97 5.32,7.22 5.25,7.49 5.21,7.76 5.21,8.05 5.25,8.33 5.32,8.62 5.43,8.90 5.58,9.17 5.76,9.43 5.97,9.67 6.22,9.88 6.50,10.06 6.80,10.21 7.13,10.33 7.47,10.40 7.82,10.43 8.18,10.42 8.55,10.37 8.90,10.26 9.25,10.12 9.59,9.92 9.90,9.69 10.19,9.41 10.44,9.10 10.66,8.75 10.84,8.38 10.97,7.98 11.05,7.56 11.08,7.13 11.06,6.69 10.98,6.25 10.85,5.82 10.67,5.40 10.43,5.00 10.14,4.63 9.81,4.29 9.43,4.00 9.01,3.74 8.57,3.54 8.09,3.39 7.59,3.30 7.08,3.27 6.57,3.30 6.05,3.40 5.55,3.56 5.06,3.78 4.60,4.06 4.17,4.40 3.78,4.79 3.44,5.23 3.15,5.72 2.92,6.24 2.75,6.79 2.65,7.37 2.62,7.96 2.66,8.55 2.78,9.14 2.96,9.72 3.22,10.27 3.55,10.80 3.94,11.29 4.39,11.73 4.89,12.11 5.45,12.44 6.04,12.70 6.67,12.89 7.32,13.00 7.99,13.03 8.66,12.98 9.32,12.85 9.98,12.63 10.60,12.34 11.19,11.97 11.74,11.53 12.23,11.02 12.67,10.45 13.03,9.83 13.32,9.16 13.52,8.46 13.65,7.73 13.68,6.99 13.62,6.24 13.47,5.50 13.23,4.77 12.91,4.08 12.50,3.42 12.00,2.81 11.44,2.27 10.81,1.79" fill="none" stroke="#b8b8b8" stroke-width="1.5"/></svg>
<div style="left:785px;top:992.12px;width:180px;height:19px;background:#1b1b1b;"></div>
<div class="t" style="left:791px;top:994.27px;font-size:14px;line-height:14px;color:#c0c0c0;transform:scaleX(0.8929);transform-origin:0 0;width:28.00px;text-align:justify;text-align-last:justify;">なし</div>
<svg style="left:944px;top:998.12px;" width="11" height="7" viewBox="0 0 11 7"><polyline points="1,1 5.5,5.5 10,1" fill="none" stroke="#b5b5b5" stroke-width="1.4"/></svg>
<div style="left:2px;top:1012.74px;width:984px;height:22px;background:#272727;"></div>
<div style="left:2px;top:1034.74px;width:1998px;height:0.7px;background:#1c1c1c;"></div>
<svg style="left:9px;top:1017.74px;" width="50" height="12" viewBox="0 0 50 12"><polygon points="8,1 8,11 1,6" fill="#6a6a6a"/><polygon points="24,1.5 28.5,6 24,10.5 19.5,6" fill="none" stroke="#bdbdbd" stroke-width="1.3"/><polygon points="39,1 39,11 46,6" fill="#bdbdbd"/></svg>
<div style="left:149px;top:1013.74px;width:21px;height:21px;background:#262626;"></div>
<svg style="left:151px;top:1015.74px;" width="17" height="17" viewBox="0 0 17 17"><circle cx="8.5" cy="10" r="6" fill="none" stroke="#3f8fe6" stroke-width="1.6"/><rect x="6" y="1" width="5" height="1.6" fill="#3f8fe6"/><rect x="7.8" y="2" width="1.4" height="2.2" fill="#3f8fe6"/><line x1="8.5" y1="10" x2="11.5" y2="6.5" stroke="#3f8fe6" stroke-width="1.5"/><line x1="12.5" y1="3.5" x2="14" y2="5" stroke="#3f8fe6" stroke-width="1.4"/></svg>
<svg style="left:176px;top:1016.74px;" width="16" height="14" viewBox="0 0 16 14"><polyline points="1,0 1,13 15,13" fill="none" stroke="#b5b5b5" stroke-width="1.4"/><polyline points="3,5 6,10 9,6 12,10 14,7" fill="none" stroke="#b5b5b5" stroke-width="1.2"/></svg>
<div class="t" style="left:197px;top:1016.89px;font-size:14px;line-height:14px;color:#b8b8b8;transform:scaleX(0.9286);transform-origin:0 0;width:28.00px;text-align:justify;text-align-last:justify;">位置</div>
<div class="t" style="left:567px;top:1017.89px;font-size:14px;line-height:14px;color:#4b9ff2;transform:scaleX(1.1088);transform-origin:0 0;">960.0,659.6</div>
<svg style="left:776px;top:1014.74px;" width="16" height="16" viewBox="0 0 16 16"><polyline points="7.90,7.95 7.99,7.93 8.08,7.89 8.17,7.84 8.25,7.78 8.33,7.70 8.39,7.60 8.45,7.50 8.49,7.38 8.52,7.25 8.53,7.11 8.52,6.96 8.49,6.82 8.43,6.67 8.36,6.53 8.27,6.39 8.15,6.26 8.01,6.14 7.86,6.04 7.69,5.96 7.50,5.90 7.30,5.86 7.10,5.85 6.88,5.86 6.67,5.90 6.45,5.97 6.25,6.07 6.05,6.20 5.86,6.36 5.69,6.54 5.54,6.75 5.42,6.97 5.32,7.22 5.25,7.49 5.21,7.76 5.21,8.05 5.25,8.33 5.32,8.62 5.43,8.90 5.58,9.17 5.76,9.43 5.97,9.67 6.22,9.88 6.50,10.06 6.80,10.21 7.13,10.33 7.47,10.40 7.82,10.43 8.18,10.42 8.55,10.37 8.90,10.26 9.25,10.12 9.59,9.92 9.90,9.69 10.19,9.41 10.44,9.10 10.66,8.75 10.84,8.38 10.97,7.98 11.05,7.56 11.08,7.13 11.06,6.69 10.98,6.25 10.85,5.82 10.67,5.40 10.43,5.00 10.14,4.63 9.81,4.29 9.43,4.00 9.01,3.74 8.57,3.54 8.09,3.39 7.59,3.30 7.08,3.27 6.57,3.30 6.05,3.40 5.55,3.56 5.06,3.78 4.60,4.06 4.17,4.40 3.78,4.79 3.44,5.23 3.15,5.72 2.92,6.24 2.75,6.79 2.65,7.37 2.62,7.96 2.66,8.55 2.78,9.14 2.96,9.72 3.22,10.27 3.55,10.80 3.94,11.29 4.39,11.73 4.89,12.11 5.45,12.44 6.04,12.70 6.67,12.89 7.32,13.00 7.99,13.03 8.66,12.98 9.32,12.85 9.98,12.63 10.60,12.34 11.19,11.97 11.74,11.53 12.23,11.02 12.67,10.45 13.03,9.83 13.32,9.16 13.52,8.46 13.65,7.73 13.68,6.99 13.62,6.24 13.47,5.50 13.23,4.77 12.91,4.08 12.50,3.42 12.00,2.81 11.44,2.27 10.81,1.79" fill="none" stroke="#b8b8b8" stroke-width="1.5"/></svg>
<div style="left:2px;top:1035.36px;width:984px;height:22px;background:#323232;"></div>
<div style="left:2px;top:1057.36px;width:1998px;height:0.7px;background:#1c1c1c;"></div>
<svg style="left:7px;top:1041.36px;" width="16" height="11" viewBox="0 0 16 11"><path d="M1,5.5 Q8,-1.5 15,5.5 Q8,12.5 1,5.5 Z" fill="#c8c8c8"/><circle cx="8" cy="5.5" r="2.6" fill="#2a2a2a"/><circle cx="8.6" cy="4.9" r="1.1" fill="#c8c8c8"/></svg>
<div style="left:42px;top:1039.36px;width:15px;height:15px;background:#1e1e1e;"></div>
<div style="left:61px;top:1039.36px;width:15px;height:15px;background:#1e1e1e;"></div>
<svg style="left:87px;top:1044.36px;" width="11" height="7" viewBox="0 0 11 7"><polyline points="1,1 5.5,5.5 10,1" fill="none" stroke="#b0b0b0" stroke-width="1.4"/></svg>
<div style="left:103.5px;top:1037.86px;width:16.5px;height:17px;background:#a9a8cf;box-shadow:0 0 0 1px #1a2a2a;"></div>
<div class="t" style="left:128px;top:1039.51px;font-size:14px;line-height:14px;color:#b4b4b4;">3</div>
<svg style="left:152px;top:1037.36px;" width="14" height="18" viewBox="0 0 14 18"><path d="M1,0.5 H9 L13.5,5 V17.5 H1 Z" fill="#f2f2f2" stroke="#bbb" stroke-width="0.8"/><path d="M9,0.5 V5 H13.5" fill="#d0d0d0" stroke="#aaa" stroke-width="0.6"/><rect x="3" y="6" width="8" height="2" fill="#9ab"/><rect x="3" y="9" width="8" height="4" fill="#6a9ed8"/><rect x="3" y="13.5" width="8" height="1.5" fill="#888"/><text x="7.0" y="16.5" font-size="4" text-anchor="middle" fill="#777" font-family="Liberation Sans">PNG</text></svg>
<div class="t" style="left:175px;top:1039.51px;font-size:14px;line-height:14px;color:#b8b8b8;transform:scaleX(0.9996);transform-origin:0 0;">Curioscene-text</div>
<div style="left:367px;top:1037.36px;width:82px;height:19px;background:#1b1b1b;"></div>
<div class="t" style="left:374px;top:1039.51px;font-size:14px;line-height:14px;color:#c0c0c0;transform:scaleX(0.9286);transform-origin:0 0;width:28.00px;text-align:justify;text-align-last:justify;">通常</div>
<svg style="left:432px;top:1043.36px;" width="11" height="7" viewBox="0 0 11 7"><polyline points="1,1 5.5,5.5 10,1" fill="none" stroke="#b5b5b5" stroke-width="1.4"/></svg>
<div style="left:455px;top:1039.36px;width:15px;height:15px;background:#1e1e1e;"></div>
<div style="left:477px;top:1037.36px;width:78px;height:19px;background:#1b1b1b;"></div>
<div class="t" style="left:484px;top:1039.51px;font-size:14px;line-height:14px;color:#c0c0c0;transform:scaleX(0.8929);transform-origin:0 0;width:28.00px;text-align:justify;text-align-last:justify;">なし</div>
<svg style="left:539px;top:1043.36px;" width="11" height="7" viewBox="0 0 11 7"><polyline points="1,1 5.5,5.5 10,1" fill="none" stroke="#b5b5b5" stroke-width="1.4"/></svg>
<div style="left:565px;top:1038.36px;width:16px;height:16px;background:#262626;"></div>
<svg style="left:566px;top:1039.36px;" width="16" height="14" viewBox="0 0 16 14"><path d="M2,8 Q2,1 8,1 Q14,1 14,8 Z" fill="#b8b8b8"/><circle cx="6" cy="5" r="1" fill="#2a2a2a"/><circle cx="10" cy="5" r="1" fill="#2a2a2a"/><rect x="7" y="8" width="2" height="4" fill="#b8b8b8"/><rect x="0" y="10" width="16" height="1.6" fill="#b8b8b8"/></svg>
<div style="left:601px;top:1038.36px;width:15px;height:16px;background:#1e1e1e;"></div>
<svg style="left:601px;top:1039.36px;" width="15" height="15" viewBox="0 0 15 15"><line x1="2" y1="13" x2="13" y2="2" stroke="#b8b8b8" stroke-width="1.6"/></svg>
<svg style="left:655px;top:1038.36px;" width="16" height="16" viewBox="0 0 16 16"><circle cx="6" cy="11" r="4.3" fill="#777" stroke="#9a9a9a" stroke-width="1"/><circle cx="8" cy="8.5" r="4.3" fill="#888" stroke="#9a9a9a" stroke-width="1"/><circle cx="10" cy="6" r="4.6" fill="#8a8a8a" stroke="#aaa" stroke-width="1.2"/></svg>
<div style="left:673px;top:1038.36px;width:15px;height:16px;background:#1e1e1e;"></div>
<div style="left:690px;top:1038.36px;width:15px;height:16px;background:#1e1e1e;"></div>
<svg style="left:761px;top:1038.36px;" width="16" height="16" viewBox="0 0 16 16"><polyline points="7.90,7.95 7.99,7.93 8.08,7.89 8.17,7.84 8.25,7.78 8.33,7.70 8.39,7.60 8.45,7.50 8.49,7.38 8.52,7.25 8.53,7.11 8.52,6.96 8.49,6.82 8.43,6.67 8.36,6.53 8.27,6.39 8.15,6.26 8.01,6.14 7.86,6.04 7.69,5.96 7.50,5.90 7.30,5.86 7.10,5.85 6.88,5.86 6.67,5.90 6.45,5.97 6.25,6.07 6.05,6.20 5.86,6.36 5.69,6.54 5.54,6.75 5.42,6.97 5.32,7.22 5.25,7.49 5.21,7.76 5.21,8.05 5.25,8.33 5.32,8.62 5.43,8.90 5.58,9.17 5.76,9.43 5.97,9.67 6.22,9.88 6.50,10.06 6.80,10.21 7.13,10.33 7.47,10.40 7.82,10.43 8.18,10.42 8.55,10.37 8.90,10.26 9.25,10.12 9.59,9.92 9.90,9.69 10.19,9.41 10.44,9.10 10.66,8.75 10.84,8.38 10.97,7.98 11.05,7.56 11.08,7.13 11.06,6.69 10.98,6.25 10.85,5.82 10.67,5.40 10.43,5.00 10.14,4.63 9.81,4.29 9.43,4.00 9.01,3.74 8.57,3.54 8.09,3.39 7.59,3.30 7.08,3.27 6.57,3.30 6.05,3.40 5.55,3.56 5.06,3.78 4.60,4.06 4.17,4.40 3.78,4.79 3.44,5.23 3.15,5.72 2.92,6.24 2.75,6.79 2.65,7.37 2.62,7.96 2.66,8.55 2.78,9.14 2.96,9.72 3.22,10.27 3.55,10.80 3.94,11.29 4.39,11.73 4.89,12.11 5.45,12.44 6.04,12.70 6.67,12.89 7.32,13.00 7.99,13.03 8.66,12.98 9.32,12.85 9.98,12.63 10.60,12.34 11.19,11.97 11.74,11.53 12.23,11.02 12.67,10.45 13.03,9.83 13.32,9.16 13.52,8.46 13.65,7.73 13.68,6.99 13.62,6.24 13.47,5.50 13.23,4.77 12.91,4.08 12.50,3.42 12.00,2.81 11.44,2.27 10.81,1.79" fill="none" stroke="#b8b8b8" stroke-width="1.5"/></svg>
<div style="left:785px;top:1037.36px;width:180px;height:19px;background:#1b1b1b;"></div>
<div class="t" style="left:791px;top:1039.51px;font-size:14px;line-height:14px;color:#c0c0c0;transform:scaleX(0.8929);transform-origin:0 0;width:28.00px;text-align:justify;text-align-last:justify;">なし</div>
<svg style="left:944px;top:1043.36px;" width="11" height="7" viewBox="0 0 11 7"><polyline points="1,1 5.5,5.5 10,1" fill="none" stroke="#b5b5b5" stroke-width="1.4"/></svg>
<div style="left:2px;top:1057.98px;width:984px;height:22px;background:#272727;"></div>
<div style="left:2px;top:1079.98px;width:1998px;height:0.7px;background:#1c1c1c;"></div>
<svg style="left:9px;top:1062.98px;" width="50" height="12" viewBox="0 0 50 12"><polygon points="8,1 8,11 1,6" fill="#6a6a6a"/><polygon points="24,1.5 28.5,6 24,10.5 19.5,6" fill="none" stroke="#bdbdbd" stroke-width="1.3"/><polygon points="39,1 39,11 46,6" fill="#bdbdbd"/></svg>
<div style="left:149px;top:1058.98px;width:21px;height:21px;background:#262626;"></div>
<svg style="left:151px;top:1060.98px;" width="17" height="17" viewBox="0 0 17 17"><circle cx="8.5" cy="10" r="6" fill="none" stroke="#3f8fe6" stroke-width="1.6"/><rect x="6" y="1" width="5" height="1.6" fill="#3f8fe6"/><rect x="7.8" y="2" width="1.4" height="2.2" fill="#3f8fe6"/><line x1="8.5" y1="10" x2="11.5" y2="6.5" stroke="#3f8fe6" stroke-width="1.5"/><line x1="12.5" y1="3.5" x2="14" y2="5" stroke="#3f8fe6" stroke-width="1.4"/></svg>
<svg style="left:176px;top:1061.98px;" width="16" height="14" viewBox="0 0 16 14"><polyline points="1,0 1,13 15,13" fill="none" stroke="#b5b5b5" stroke-width="1.4"/><polyline points="3,5 6,10 9,6 12,10 14,7" fill="none" stroke="#b5b5b5" stroke-width="1.2"/></svg>
<div class="t" style="left:197px;top:1062.13px;font-size:14px;line-height:14px;color:#b8b8b8;transform:scaleX(0.8571);transform-origin:0 0;width:56.00px;text-align:justify;text-align-last:justify;">スケール</div>
<svg style="left:565px;top:1062.98px;" width="16" height="12" viewBox="0 0 16 12"><path d="M6,2 H4 Q1,2 1,5 Q1,8 4,8 H6 M10,2 H12 Q15,2 15,5 Q15,8 12,8 H10 M5,5 H11" fill="none" stroke="#b8b8b8" stroke-width="1.5"/></svg>
<div class="t" style="left:587px;top:1063.13px;font-size:14px;line-height:14px;color:#4b9ff2;transform:scaleX(1.1220);transform-origin:0 0;">0.0,0.0%</div>
<svg style="left:776px;top:1059.98px;" width="16" height="16" viewBox="0 0 16 16"><polyline points="7.90,7.95 7.99,7.93 8.08,7.89 8.17,7.84 8.25,7.78 8.33,7.70 8.39,7.60 8.45,7.50 8.49,7.38 8.52,7.25 8.53,7.11 8.52,6.96 8.49,6.82 8.43,6.67 8.36,6.53 8.27,6.39 8.15,6.26 8.01,6.14 7.86,6.04 7.69,5.96 7.50,5.90 7.30,5.86 7.10,5.85 6.88,5.86 6.67,5.90 6.45,5.97 6.25,6.07 6.05,6.20 5.86,6.36 5.69,6.54 5.54,6.75 5.42,6.97 5.32,7.22 5.25,7.49 5.21,7.76 5.21,8.05 5.25,8.33 5.32,8.62 5.43,8.90 5.58,9.17 5.76,9.43 5.97,9.67 6.22,9.88 6.50,10.06 6.80,10.21 7.13,10.33 7.47,10.40 7.82,10.43 8.18,10.42 8.55,10.37 8.90,10.26 9.25,10.12 9.59,9.92 9.90,9.69 10.19,9.41 10.44,9.10 10.66,8.75 10.84,8.38 10.97,7.98 11.05,7.56 11.08,7.13 11.06,6.69 10.98,6.25 10.85,5.82 10.67,5.40 10.43,5.00 10.14,4.63 9.81,4.29 9.43,4.00 9.01,3.74 8.57,3.54 8.09,3.39 7.59,3.30 7.08,3.27 6.57,3.30 6.05,3.40 5.55,3.56 5.06,3.78 4.60,4.06 4.17,4.40 3.78,4.79 3.44,5.23 3.15,5.72 2.92,6.24 2.75,6.79 2.65,7.37 2.62,7.96 2.66,8.55 2.78,9.14 2.96,9.72 3.22,10.27 3.55,10.80 3.94,11.29 4.39,11.73 4.89,12.11 5.45,12.44 6.04,12.70 6.67,12.89 7.32,13.00 7.99,13.03 8.66,12.98 9.32,12.85 9.98,12.63 10.60,12.34 11.19,11.97 11.74,11.53 12.23,11.02 12.67,10.45 13.03,9.83 13.32,9.16 13.52,8.46 13.65,7.73 13.68,6.99 13.62,6.24 13.47,5.50 13.23,4.77 12.91,4.08 12.50,3.42 12.00,2.81 11.44,2.27 10.81,1.79" fill="none" stroke="#b8b8b8" stroke-width="1.5"/></svg>
<div style="left:2px;top:1080.6px;width:984px;height:22px;background:#323232;"></div>
<div style="left:2px;top:1102.6px;width:1998px;height:0.7px;background:#1c1c1c;"></div>
<svg style="left:7px;top:1086.6px;" width="16" height="11" viewBox="0 0 16 11"><path d="M1,5.5 Q8,-1.5 15,5.5 Q8,12.5 1,5.5 Z" fill="#c8c8c8"/><circle cx="8" cy="5.5" r="2.6" fill="#2a2a2a"/><circle cx="8.6" cy="4.9" r="1.1" fill="#c8c8c8"/></svg>
<div style="left:42px;top:1084.6px;width:15px;height:15px;background:#1e1e1e;"></div>
<div style="left:61px;top:1084.6px;width:15px;height:15px;background:#1e1e1e;"></div>
<svg style="left:87px;top:1089.6px;" width="11" height="7" viewBox="0 0 11 7"><polyline points="1,1 5.5,5.5 10,1" fill="none" stroke="#b0b0b0" stroke-width="1.4"/></svg>
<div style="left:103.5px;top:1083.1px;width:16.5px;height:17px;background:#b09f7d;box-shadow:0 0 0 1px #1a2a2a;"></div>
<div class="t" style="left:128px;top:1084.75px;font-size:14px;line-height:14px;color:#b4b4b4;">4</div>
<svg style="left:150px;top:1083.6px;" width="20" height="16" viewBox="0 0 20 16"><rect x="0.5" y="0.5" width="19" height="15" fill="#d8d8d8" stroke="#9a9a9a"/><rect x="3.5" y="2" width="13" height="12" fill="#f0f0f0"/><g fill="#555"><rect x="1" y="1.5" width="1.5" height="1.3"/><rect x="17.5" y="1.5" width="1.5" height="1.3"/><rect x="1" y="4.1" width="1.5" height="1.3"/><rect x="17.5" y="4.1" width="1.5" height="1.3"/><rect x="1" y="6.7" width="1.5" height="1.3"/><rect x="17.5" y="6.7" width="1.5" height="1.3"/><rect x="1" y="9.3" width="1.5" height="1.3"/><rect x="17.5" y="9.3" width="1.5" height="1.3"/><rect x="1" y="11.9" width="1.5" height="1.3"/><rect x="17.5" y="11.9" width="1.5" height="1.3"/></g><circle cx="7.5" cy="6" r="2.6" fill="#3d8fe8"/><polygon points="10,4 16,4 15,10" fill="#e0463a"/><polygon points="8.5,7 12,12.5 5,12.5" fill="#3aa64a"/><rect x="4" y="13" width="12" height="1.4" fill="#888"/></svg>
<div class="t" style="left:175px;top:1084.75px;font-size:14px;line-height:14px;color:#b8b8b8;transform:scaleX(1.0044);transform-origin:0 0;">[CS-Logo Part]</div>
<div style="left:367px;top:1082.6px;width:82px;height:19px;background:#1b1b1b;"></div>
<div class="t" style="left:374px;top:1084.75px;font-size:14px;line-height:14px;color:#c0c0c0;transform:scaleX(0.9286);transform-origin:0 0;width:28.00px;text-align:justify;text-align-last:justify;">通常</div>
<svg style="left:432px;top:1088.6px;" width="11" height="7" viewBox="0 0 11 7"><polyline points="1,1 5.5,5.5 10,1" fill="none" stroke="#b5b5b5" stroke-width="1.4"/></svg>
<div style="left:455px;top:1084.6px;width:15px;height:15px;background:#1e1e1e;"></div>
<div style="left:477px;top:1082.6px;width:78px;height:19px;background:#1b1b1b;"></div>
<div class="t" style="left:484px;top:1084.75px;font-size:14px;line-height:14px;color:#c0c0c0;transform:scaleX(0.8929);transform-origin:0 0;width:28.00px;text-align:justify;text-align-last:justify;">なし</div>
<svg style="left:539px;top:1088.6px;" width="11" height="7" viewBox="0 0 11 7"><polyline points="1,1 5.5,5.5 10,1" fill="none" stroke="#b5b5b5" stroke-width="1.4"/></svg>
<div style="left:565px;top:1083.6px;width:16px;height:16px;background:#262626;"></div>
<svg style="left:566px;top:1084.6px;" width="16" height="14" viewBox="0 0 16 14"><path d="M2,8 Q2,1 8,1 Q14,1 14,8 Z" fill="#b8b8b8"/><circle cx="6" cy="5" r="1" fill="#2a2a2a"/><circle cx="10" cy="5" r="1" fill="#2a2a2a"/><rect x="7" y="8" width="2" height="4" fill="#b8b8b8"/><rect x="0" y="10" width="16" height="1.6" fill="#b8b8b8"/></svg>
<div style="left:584px;top:1083.6px;width:15px;height:16px;background:#1e1e1e;"></div>
<div style="left:601px;top:1083.6px;width:15px;height:16px;background:#1e1e1e;"></div>
<svg style="left:601px;top:1084.6px;" width="15" height="15" viewBox="0 0 15 15"><line x1="2" y1="13" x2="13" y2="2" stroke="#b8b8b8" stroke-width="1.6"/></svg>
<svg style="left:655px;top:1083.6px;" width="16" height="16" viewBox="0 0 16 16"><circle cx="6" cy="11" r="4.3" fill="#777" stroke="#9a9a9a" stroke-width="1"/><circle cx="8" cy="8.5" r="4.3" fill="#888" stroke="#9a9a9a" stroke-width="1"/><circle cx="10" cy="6" r="4.6" fill="#8a8a8a" stroke="#aaa" stroke-width="1.2"/></svg>
<div style="left:673px;top:1083.6px;width:15px;height:16px;background:#1e1e1e;"></div>
<div style="left:690px;top:1083.6px;width:15px;height:16px;background:#1e1e1e;"></div>
<svg style="left:761px;top:1083.6px;" width="16" height="16" viewBox="0 0 16 16"><polyline points="7.90,7.95 7.99,7.93 8.08,7.89 8.17,7.84 8.25,7.78 8.33,7.70 8.39,7.60 8.45,7.50 8.49,7.38 8.52,7.25 8.53,7.11 8.52,6.96 8.49,6.82 8.43,6.67 8.36,6.53 8.27,6.39 8.15,6.26 8.01,6.14 7.86,6.04 7.69,5.96 7.50,5.90 7.30,5.86 7.10,5.85 6.88,5.86 6.67,5.90 6.45,5.97 6.25,6.07 6.05,6.20 5.86,6.36 5.69,6.54 5.54,6.75 5.42,6.97 5.32,7.22 5.25,7.49 5.21,7.76 5.21,8.05 5.25,8.33 5.32,8.62 5.43,8.90 5.58,9.17 5.76,9.43 5.97,9.67 6.22,9.88 6.50,10.06 6.80,10.21 7.13,10.33 7.47,10.40 7.82,10.43 8.18,10.42 8.55,10.37 8.90,10.26 9.25,10.12 9.59,9.92 9.90,9.69 10.19,9.41 10.44,9.10 10.66,8.75 10.84,8.38 10.97,7.98 11.05,7.56 11.08,7.13 11.06,6.69 10.98,6.25 10.85,5.82 10.67,5.40 10.43,5.00 10.14,4.63 9.81,4.29 9.43,4.00 9.01,3.74 8.57,3.54 8.09,3.39 7.59,3.30 7.08,3.27 6.57,3.30 6.05,3.40 5.55,3.56 5.06,3.78 4.60,4.06 4.17,4.40 3.78,4.79 3.44,5.23 3.15,5.72 2.92,6.24 2.75,6.79 2.65,7.37 2.62,7.96 2.66,8.55 2.78,9.14 2.96,9.72 3.22,10.27 3.55,10.80 3.94,11.29 4.39,11.73 4.89,12.11 5.45,12.44 6.04,12.70 6.67,12.89 7.32,13.00 7.99,13.03 8.66,12.98 9.32,12.85 9.98,12.63 10.60,12.34 11.19,11.97 11.74,11.53 12.23,11.02 12.67,10.45 13.03,9.83 13.32,9.16 13.52,8.46 13.65,7.73 13.68,6.99 13.62,6.24 13.47,5.50 13.23,4.77 12.91,4.08 12.50,3.42 12.00,2.81 11.44,2.27 10.81,1.79" fill="none" stroke="#b8b8b8" stroke-width="1.5"/></svg>
<div style="left:785px;top:1082.6px;width:180px;height:19px;background:#1b1b1b;"></div>
<div class="t" style="left:791px;top:1084.75px;font-size:14px;line-height:14px;color:#c0c0c0;transform:scaleX(0.8929);transform-origin:0 0;width:28.00px;text-align:justify;text-align-last:justify;">なし</div>
<svg style="left:944px;top:1088.6px;" width="11" height="7" viewBox="0 0 11 7"><polyline points="1,1 5.5,5.5 10,1" fill="none" stroke="#b5b5b5" stroke-width="1.4"/></svg>
<div style="left:2px;top:1103.22px;width:984px;height:22px;background:#272727;"></div>
<div style="left:2px;top:1125.22px;width:1998px;height:0.7px;background:#1c1c1c;"></div>
<svg style="left:9px;top:1108.22px;" width="50" height="12" viewBox="0 0 50 12"><polygon points="8,1 8,11 1,6" fill="#6a6a6a"/><polygon points="24,1.5 28.5,6 24,10.5 19.5,6" fill="none" stroke="#bdbdbd" stroke-width="1.3"/><polygon points="39,1 39,11 46,6" fill="#bdbdbd"/></svg>
<div style="left:149px;top:1104.22px;width:21px;height:21px;background:#262626;"></div>
<svg style="left:151px;top:1106.22px;" width="17" height="17" viewBox="0 0 17 17"><circle cx="8.5" cy="10" r="6" fill="none" stroke="#3f8fe6" stroke-width="1.6"/><rect x="6" y="1" width="5" height="1.6" fill="#3f8fe6"/><rect x="7.8" y="2" width="1.4" height="2.2" fill="#3f8fe6"/><line x1="8.5" y1="10" x2="11.5" y2="6.5" stroke="#3f8fe6" stroke-width="1.5"/><line x1="12.5" y1="3.5" x2="14" y2="5" stroke="#3f8fe6" stroke-width="1.4"/></svg>
<svg style="left:176px;top:1107.22px;" width="16" height="14" viewBox="0 0 16 14"><polyline points="1,0 1,13 15,13" fill="none" stroke="#b5b5b5" stroke-width="1.4"/><polyline points="3,5 6,10 9,6 12,10 14,7" fill="none" stroke="#b5b5b5" stroke-width="1.2"/></svg>
<div class="t" style="left:197px;top:1107.37px;font-size:14px;line-height:14px;color:#b8b8b8;transform:scaleX(0.9286);transform-origin:0 0;width:28.00px;text-align:justify;text-align-last:justify;">位置</div>
<div class="t" style="left:567px;top:1108.37px;font-size:14px;line-height:14px;color:#4b9ff2;transform:scaleX(1.1088);transform-origin:0 0;">960.0,540.0</div>
<svg style="left:776px;top:1105.22px;" width="16" height="16" viewBox="0 0 16 16"><polyline points="7.90,7.95 7.99,7.93 8.08,7.89 8.17,7.84 8.25,7.78 8.33,7.70 8.39,7.60 8.45,7.50 8.49,7.38 8.52,7.25 8.53,7.11 8.52,6.96 8.49,6.82 8.43,6.67 8.36,6.53 8.27,6.39 8.15,6.26 8.01,6.14 7.86,6.04 7.69,5.96 7.50,5.90 7.30,5.86 7.10,5.85 6.88,5.86 6.67,5.90 6.45,5.97 6.25,6.07 6.05,6.20 5.86,6.36 5.69,6.54 5.54,6.75 5.42,6.97 5.32,7.22 5.25,7.49 5.21,7.76 5.21,8.05 5.25,8.33 5.32,8.62 5.43,8.90 5.58,9.17 5.76,9.43 5.97,9.67 6.22,9.88 6.50,10.06 6.80,10.21 7.13,10.33 7.47,10.40 7.82,10.43 8.18,10.42 8.55,10.37 8.90,10.26 9.25,10.12 9.59,9.92 9.90,9.69 10.19,9.41 10.44,9.10 10.66,8.75 10.84,8.38 10.97,7.98 11.05,7.56 11.08,7.13 11.06,6.69 10.98,6.25 10.85,5.82 10.67,5.40 10.43,5.00 10.14,4.63 9.81,4.29 9.43,4.00 9.01,3.74 8.57,3.54 8.09,3.39 7.59,3.30 7.08,3.27 6.57,3.30 6.05,3.40 5.55,3.56 5.06,3.78 4.60,4.06 4.17,4.40 3.78,4.79 3.44,5.23 3.15,5.72 2.92,6.24 2.75,6.79 2.65,7.37 2.62,7.96 2.66,8.55 2.78,9.14 2.96,9.72 3.22,10.27 3.55,10.80 3.94,11.29 4.39,11.73 4.89,12.11 5.45,12.44 6.04,12.70 6.67,12.89 7.32,13.00 7.99,13.03 8.66,12.98 9.32,12.85 9.98,12.63 10.60,12.34 11.19,11.97 11.74,11.53 12.23,11.02 12.67,10.45 13.03,9.83 13.32,9.16 13.52,8.46 13.65,7.73 13.68,6.99 13.62,6.24 13.47,5.50 13.23,4.77 12.91,4.08 12.50,3.42 12.00,2.81 11.44,2.27 10.81,1.79" fill="none" stroke="#b8b8b8" stroke-width="1.5"/></svg>
<div style="left:2px;top:1125.84px;width:984px;height:22px;background:#323232;"></div>
<div style="left:2px;top:1147.84px;width:1998px;height:0.7px;background:#1c1c1c;"></div>
<svg style="left:7px;top:1131.84px;" width="16" height="11" viewBox="0 0 16 11"><path d="M1,5.5 Q8,-1.5 15,5.5 Q8,12.5 1,5.5 Z" fill="#c8c8c8"/><circle cx="8" cy="5.5" r="2.6" fill="#2a2a2a"/><circle cx="8.6" cy="4.9" r="1.1" fill="#c8c8c8"/></svg>
<div style="left:42px;top:1129.84px;width:15px;height:15px;background:#1e1e1e;"></div>
<div style="left:61px;top:1129.84px;width:15px;height:15px;background:#1e1e1e;"></div>
<svg style="left:87px;top:1134.84px;" width="11" height="7" viewBox="0 0 11 7"><polyline points="1,1 5.5,5.5 10,1" fill="none" stroke="#b0b0b0" stroke-width="1.4"/></svg>
<div style="left:103.5px;top:1128.34px;width:16.5px;height:17px;background:#a84444;box-shadow:0 0 0 1px #1a2a2a;"></div>
<div class="t" style="left:128px;top:1129.99px;font-size:14px;line-height:14px;color:#b4b4b4;">5</div>
<div style="left:151px;top:1128.84px;width:16px;height:16px;background:#efefef;"></div>
<div class="t" style="left:175px;top:1129.99px;font-size:14px;line-height:14px;color:#b8b8b8;transform:scaleX(0.8942);transform-origin:0 0;width:107.36px;text-align:justify;text-align-last:justify;">[ホワイト 平面 1]</div>
<div style="left:367px;top:1127.84px;width:82px;height:19px;background:#1b1b1b;"></div>
<div class="t" style="left:374px;top:1129.99px;font-size:14px;line-height:14px;color:#c0c0c0;transform:scaleX(0.9286);transform-origin:0 0;width:28.00px;text-align:justify;text-align-last:justify;">通常</div>
<svg style="left:432px;top:1133.84px;" width="11" height="7" viewBox="0 0 11 7"><polyline points="1,1 5.5,5.5 10,1" fill="none" stroke="#b5b5b5" stroke-width="1.4"/></svg>
<div style="left:455px;top:1129.84px;width:15px;height:15px;background:#1e1e1e;"></div>
<div style="left:477px;top:1127.84px;width:78px;height:19px;background:#1b1b1b;"></div>
<div class="t" style="left:484px;top:1129.99px;font-size:14px;line-height:14px;color:#c0c0c0;transform:scaleX(0.8929);transform-origin:0 0;width:28.00px;text-align:justify;text-align-last:justify;">なし</div>
<svg style="left:539px;top:1133.84px;" width="11" height="7" viewBox="0 0 11 7"><polyline points="1,1 5.5,5.5 10,1" fill="none" stroke="#b5b5b5" stroke-width="1.4"/></svg>
<div style="left:565px;top:1128.84px;width:16px;height:16px;background:#262626;"></div>
<svg style="left:566px;top:1129.84px;" width="16" height="14" viewBox="0 0 16 14"><path d="M2,8 Q2,1 8,1 Q14,1 14,8 Z" fill="#b8b8b8"/><circle cx="6" cy="5" r="1" fill="#2a2a2a"/><circle cx="10" cy="5" r="1" fill="#2a2a2a"/><rect x="7" y="8" width="2" height="4" fill="#b8b8b8"/><rect x="0" y="10" width="16" height="1.6" fill="#b8b8b8"/></svg>
<div style="left:584px;top:1128.84px;width:15px;height:16px;background:#1e1e1e;"></div>
<div style="left:601px;top:1128.84px;width:15px;height:16px;background:#1e1e1e;"></div>
<svg style="left:601px;top:1129.84px;" width="15" height="15" viewBox="0 0 15 15"><line x1="2" y1="13" x2="13" y2="2" stroke="#b8b8b8" stroke-width="1.6"/></svg>
<div style="left:619px;top:1128.84px;width:15px;height:16px;background:#1e1e1e;"></div>
<div class="t" style="left:620px;top:1129.14px;font-size:15px;line-height:15px;color:#b8b8b8;font-family:'Liberation Serif',serif;"><i>fx</i></div>
<div style="left:655px;top:1128.84px;width:15px;height:16px;background:#1e1e1e;"></div>
<div style="left:673px;top:1128.84px;width:15px;height:16px;background:#1e1e1e;"></div>
<div style="left:690px;top:1128.84px;width:15px;height:16px;background:#1e1e1e;"></div>
<svg style="left:761px;top:1128.84px;" width="16" height="16" viewBox="0 0 16 16"><polyline points="7.90,7.95 7.99,7.93 8.08,7.89 8.17,7.84 8.25,7.78 8.33,7.70 8.39,7.60 8.45,7.50 8.49,7.38 8.52,7.25 8.53,7.11 8.52,6.96 8.49,6.82 8.43,6.67 8.36,6.53 8.27,6.39 8.15,6.26 8.01,6.14 7.86,6.04 7.69,5.96 7.50,5.90 7.30,5.86 7.10,5.85 6.88,5.86 6.67,5.90 6.45,5.97 6.25,6.07 6.05,6.20 5.86,6.36 5.69,6.54 5.54,6.75 5.42,6.97 5.32,7.22 5.25,7.49 5.21,7.76 5.21,8.05 5.25,8.33 5.32,8.62 5.43,8.90 5.58,9.17 5.76,9.43 5.97,9.67 6.22,9.88 6.50,10.06 6.80,10.21 7.13,10.33 7.47,10.40 7.82,10.43 8.18,10.42 8.55,10.37 8.90,10.26 9.25,10.12 9.59,9.92 9.90,9.69 10.19,9.41 10.44,9.10 10.66,8.75 10.84,8.38 10.97,7.98 11.05,7.56 11.08,7.13 11.06,6.69 10.98,6.25 10.85,5.82 10.67,5.40 10.43,5.00 10.14,4.63 9.81,4.29 9.43,4.00 9.01,3.74 8.57,3.54 8.09,3.39 7.59,3.30 7.08,3.27 6.57,3.30 6.05,3.40 5.55,3.56 5.06,3.78 4.60,4.06 4.17,4.40 3.78,4.79 3.44,5.23 3.15,5.72 2.92,6.24 2.75,6.79 2.65,7.37 2.62,7.96 2.66,8.55 2.78,9.14 2.96,9.72 3.22,10.27 3.55,10.80 3.94,11.29 4.39,11.73 4.89,12.11 5.45,12.44 6.04,12.70 6.67,12.89 7.32,13.00 7.99,13.03 8.66,12.98 9.32,12.85 9.98,12.63 10.60,12.34 11.19,11.97 11.74,11.53 12.23,11.02 12.67,10.45 13.03,9.83 13.32,9.16 13.52,8.46 13.65,7.73 13.68,6.99 13.62,6.24 13.47,5.50 13.23,4.77 12.91,4.08 12.50,3.42 12.00,2.81 11.44,2.27 10.81,1.79" fill="none" stroke="#b8b8b8" stroke-width="1.5"/></svg>
<div style="left:785px;top:1127.84px;width:180px;height:19px;background:#1b1b1b;"></div>
<div class="t" style="left:791px;top:1129.99px;font-size:14px;line-height:14px;color:#c0c0c0;transform:scaleX(0.8929);transform-origin:0 0;width:28.00px;text-align:justify;text-align-last:justify;">なし</div>
<svg style="left:944px;top:1133.84px;" width="11" height="7" viewBox="0 0 11 7"><polyline points="1,1 5.5,5.5 10,1" fill="none" stroke="#b5b5b5" stroke-width="1.4"/></svg>
<div style="left:2px;top:1148.46px;width:984px;height:22px;background:#272727;"></div>
<div style="left:2px;top:1170.46px;width:1998px;height:0.7px;background:#1c1c1c;"></div>
<svg style="left:9px;top:1153.46px;" width="50" height="12" viewBox="0 0 50 12"><polygon points="8,1 8,11 1,6" fill="#bdbdbd"/><polygon points="24,1.5 28.5,6 24,10.5 19.5,6" fill="none" stroke="#bdbdbd" stroke-width="1.3"/><polygon points="39,1 39,11 46,6" fill="#bdbdbd"/></svg>
<div style="left:149px;top:1149.46px;width:21px;height:21px;background:#262626;"></div>
<svg style="left:151px;top:1151.46px;" width="17" height="17" viewBox="0 0 17 17"><circle cx="8.5" cy="10" r="6" fill="none" stroke="#3f8fe6" stroke-width="1.6"/><rect x="6" y="1" width="5" height="1.6" fill="#3f8fe6"/><rect x="7.8" y="2" width="1.4" height="2.2" fill="#3f8fe6"/><line x1="8.5" y1="10" x2="11.5" y2="6.5" stroke="#3f8fe6" stroke-width="1.5"/><line x1="12.5" y1="3.5" x2="14" y2="5" stroke="#3f8fe6" stroke-width="1.4"/></svg>
<svg style="left:176px;top:1152.46px;" width="16" height="14" viewBox="0 0 16 14"><polyline points="1,0 1,13 15,13" fill="none" stroke="#b5b5b5" stroke-width="1.4"/><polyline points="3,5 6,10 9,6 12,10 14,7" fill="none" stroke="#b5b5b5" stroke-width="1.2"/></svg>
<div class="t" style="left:197px;top:1152.61px;font-size:14px;line-height:14px;color:#b8b8b8;transform:scaleX(0.9286);transform-origin:0 0;width:28.00px;text-align:justify;text-align-last:justify;">位置</div>
<div class="t" style="left:567px;top:1153.61px;font-size:14px;line-height:14px;color:#4b9ff2;transform:scaleX(1.0558);transform-origin:0 0;">960.0,-213.1</div>
<svg style="left:776px;top:1150.46px;" width="16" height="16" viewBox="0 0 16 16"><polyline points="7.90,7.95 7.99,7.93 8.08,7.89 8.17,7.84 8.25,7.78 8.33,7.70 8.39,7.60 8.45,7.50 8.49,7.38 8.52,7.25 8.53,7.11 8.52,6.96 8.49,6.82 8.43,6.67 8.36,6.53 8.27,6.39 8.15,6.26 8.01,6.14 7.86,6.04 7.69,5.96 7.50,5.90 7.30,5.86 7.10,5.85 6.88,5.86 6.67,5.90 6.45,5.97 6.25,6.07 6.05,6.20 5.86,6.36 5.69,6.54 5.54,6.75 5.42,6.97 5.32,7.22 5.25,7.49 5.21,7.76 5.21,8.05 5.25,8.33 5.32,8.62 5.43,8.90 5.58,9.17 5.76,9.43 5.97,9.67 6.22,9.88 6.50,10.06 6.80,10.21 7.13,10.33 7.47,10.40 7.82,10.43 8.18,10.42 8.55,10.37 8.90,10.26 9.25,10.12 9.59,9.92 9.90,9.69 10.19,9.41 10.44,9.10 10.66,8.75 10.84,8.38 10.97,7.98 11.05,7.56 11.08,7.13 11.06,6.69 10.98,6.25 10.85,5.82 10.67,5.40 10.43,5.00 10.14,4.63 9.81,4.29 9.43,4.00 9.01,3.74 8.57,3.54 8.09,3.39 7.59,3.30 7.08,3.27 6.57,3.30 6.05,3.40 5.55,3.56 5.06,3.78 4.60,4.06 4.17,4.40 3.78,4.79 3.44,5.23 3.15,5.72 2.92,6.24 2.75,6.79 2.65,7.37 2.62,7.96 2.66,8.55 2.78,9.14 2.96,9.72 3.22,10.27 3.55,10.80 3.94,11.29 4.39,11.73 4.89,12.11 5.45,12.44 6.04,12.70 6.67,12.89 7.32,13.00 7.99,13.03 8.66,12.98 9.32,12.85 9.98,12.63 10.60,12.34 11.19,11.97 11.74,11.53 12.23,11.02 12.67,10.45 13.03,9.83 13.32,9.16 13.52,8.46 13.65,7.73 13.68,6.99 13.62,6.24 13.47,5.50 13.23,4.77 12.91,4.08 12.50,3.42 12.00,2.81 11.44,2.27 10.81,1.79" fill="none" stroke="#b8b8b8" stroke-width="1.5"/></svg>
<div style="left:2px;top:1171.08px;width:984px;height:22px;background:#4a4a4a;"></div>
<div style="left:2px;top:1193.08px;width:1998px;height:0.7px;background:#1c1c1c;"></div>
<svg style="left:7px;top:1177.08px;" width="16" height="11" viewBox="0 0 16 11"><path d="M1,5.5 Q8,-1.5 15,5.5 Q8,12.5 1,5.5 Z" fill="#c8c8c8"/><circle cx="8" cy="5.5" r="2.6" fill="#2a2a2a"/><circle cx="8.6" cy="4.9" r="1.1" fill="#c8c8c8"/></svg>
<div style="left:42px;top:1175.08px;width:15px;height:15px;background:#3a3a3a;"></div>
<div style="left:61px;top:1175.08px;width:15px;height:15px;background:#3a3a3a;"></div>
<svg style="left:90px;top:1177.08px;" width="7" height="11" viewBox="0 0 7 11"><polyline points="1,1 5.5,5.5 1,10" fill="none" stroke="#b0b0b0" stroke-width="1.4"/></svg>
<div style="left:103.5px;top:1173.58px;width:16.5px;height:17px;background:#a84444;box-shadow:0 0 0 1px #1a2a2a;"></div>
<div class="t" style="left:128px;top:1175.23px;font-size:14px;line-height:14px;color:#b4b4b4;">6</div>
<div style="left:150px;top:1173.08px;width:18px;height:18px;background:#000;"></div>
<div style="left:151px;top:1174.08px;width:16px;height:16px;background:#7ff84f;"></div>
<div style="left:171px;top:1171.08px;width:191px;height:22px;background:#a6a6a6;"></div>
<div class="t" style="left:175px;top:1175.23px;font-size:14px;line-height:14px;color:#2a2a2a;transform:scaleX(0.9035);transform-origin:0 0;width:107.36px;text-align:justify;text-align-last:justify;">[グリーン 平面 1]</div>
<div style="left:367px;top:1173.08px;width:82px;height:19px;background:#1b1b1b;"></div>
<div class="t" style="left:374px;top:1175.23px;font-size:14px;line-height:14px;color:#c0c0c0;transform:scaleX(0.9286);transform-origin:0 0;width:28.00px;text-align:justify;text-align-last:justify;">通常</div>
<svg style="left:432px;top:1179.08px;" width="11" height="7" viewBox="0 0 11 7"><polyline points="1,1 5.5,5.5 10,1" fill="none" stroke="#b5b5b5" stroke-width="1.4"/></svg>
<div style="left:455px;top:1175.08px;width:15px;height:15px;background:#3a3a3a;"></div>
<div style="left:477px;top:1173.08px;width:78px;height:19px;background:#1b1b1b;"></div>
<div class="t" style="left:484px;top:1175.23px;font-size:14px;line-height:14px;color:#c0c0c0;transform:scaleX(0.8929);transform-origin:0 0;width:28.00px;text-align:justify;text-align-last:justify;">なし</div>
<svg style="left:539px;top:1179.08px;" width="11" height="7" viewBox="0 0 11 7"><polyline points="1,1 5.5,5.5 10,1" fill="none" stroke="#b5b5b5" stroke-width="1.4"/></svg>
<div style="left:565px;top:1174.08px;width:16px;height:16px;background:#3a3a3a;"></div>
<svg style="left:566px;top:1175.08px;" width="16" height="14" viewBox="0 0 16 14"><path d="M2,8 Q2,1 8,1 Q14,1 14,8 Z" fill="#b8b8b8"/><circle cx="6" cy="5" r="1" fill="#2a2a2a"/><circle cx="10" cy="5" r="1" fill="#2a2a2a"/><rect x="7" y="8" width="2" height="4" fill="#b8b8b8"/><rect x="0" y="10" width="16" height="1.6" fill="#b8b8b8"/></svg>
<div style="left:584px;top:1174.08px;width:15px;height:16px;background:#3a3a3a;"></div>
<div style="left:601px;top:1174.08px;width:15px;height:16px;background:#3a3a3a;"></div>
<svg style="left:601px;top:1175.08px;" width="15" height="15" viewBox="0 0 15 15"><line x1="2" y1="13" x2="13" y2="2" stroke="#b8b8b8" stroke-width="1.6"/></svg>
<div style="left:655px;top:1174.08px;width:15px;height:16px;background:#3a3a3a;"></div>
<div style="left:673px;top:1174.08px;width:15px;height:16px;background:#3a3a3a;"></div>
<div style="left:690px;top:1174.08px;width:15px;height:16px;background:#3a3a3a;"></div>
<div style="left:756px;top:1171.08px;width:33px;height:22px;background:#555;"></div>
<svg style="left:761px;top:1174.08px;" width="16" height="16" viewBox="0 0 16 16"><polyline points="7.90,7.95 7.99,7.93 8.08,7.89 8.17,7.84 8.25,7.78 8.33,7.70 8.39,7.60 8.45,7.50 8.49,7.38 8.52,7.25 8.53,7.11 8.52,6.96 8.49,6.82 8.43,6.67 8.36,6.53 8.27,6.39 8.15,6.26 8.01,6.14 7.86,6.04 7.69,5.96 7.50,5.90 7.30,5.86 7.10,5.85 6.88,5.86 6.67,5.90 6.45,5.97 6.25,6.07 6.05,6.20 5.86,6.36 5.69,6.54 5.54,6.75 5.42,6.97 5.32,7.22 5.25,7.49 5.21,7.76 5.21,8.05 5.25,8.33 5.32,8.62 5.43,8.90 5.58,9.17 5.76,9.43 5.97,9.67 6.22,9.88 6.50,10.06 6.80,10.21 7.13,10.33 7.47,10.40 7.82,10.43 8.18,10.42 8.55,10.37 8.90,10.26 9.25,10.12 9.59,9.92 9.90,9.69 10.19,9.41 10.44,9.10 10.66,8.75 10.84,8.38 10.97,7.98 11.05,7.56 11.08,7.13 11.06,6.69 10.98,6.25 10.85,5.82 10.67,5.40 10.43,5.00 10.14,4.63 9.81,4.29 9.43,4.00 9.01,3.74 8.57,3.54 8.09,3.39 7.59,3.30 7.08,3.27 6.57,3.30 6.05,3.40 5.55,3.56 5.06,3.78 4.60,4.06 4.17,4.40 3.78,4.79 3.44,5.23 3.15,5.72 2.92,6.24 2.75,6.79 2.65,7.37 2.62,7.96 2.66,8.55 2.78,9.14 2.96,9.72 3.22,10.27 3.55,10.80 3.94,11.29 4.39,11.73 4.89,12.11 5.45,12.44 6.04,12.70 6.67,12.89 7.32,13.00 7.99,13.03 8.66,12.98 9.32,12.85 9.98,12.63 10.60,12.34 11.19,11.97 11.74,11.53 12.23,11.02 12.67,10.45 13.03,9.83 13.32,9.16 13.52,8.46 13.65,7.73 13.68,6.99 13.62,6.24 13.47,5.50 13.23,4.77 12.91,4.08 12.50,3.42 12.00,2.81 11.44,2.27 10.81,1.79" fill="none" stroke="#b8b8b8" stroke-width="1.5"/></svg>
<div style="left:785px;top:1173.08px;width:180px;height:19px;background:#1b1b1b;"></div>
<div class="t" style="left:791px;top:1175.23px;font-size:14px;line-height:14px;color:#c0c0c0;transform:scaleX(0.8929);transform-origin:0 0;width:28.00px;text-align:justify;text-align-last:justify;">なし</div>
<svg style="left:944px;top:1179.08px;" width="11" height="7" viewBox="0 0 11 7"><polyline points="1,1 5.5,5.5 10,1" fill="none" stroke="#b5b5b5" stroke-width="1.4"/></svg>
<div style="left:985px;top:944px;width:1px;height:258px;background:#0f0f0f;"></div>
<div style="left:986px;top:868px;width:1014px;height:41px;background:#272727;"></div>
<div style="left:988px;top:909px;width:990px;height:10px;background:#6f6f6f;border-radius:5px 0 0 5px;"></div>
<div style="left:1886px;top:909px;width:92px;height:10px;background:#3a352f;"></div>
<div style="left:1973px;top:909px;width:5px;height:10px;background:#1a1a1a;"></div>
<div style="left:988px;top:909px;width:7px;height:10px;background:#3d8fe8;border-radius:5px 0 0 5px;"></div>
<div style="left:1883px;top:909px;width:7px;height:10px;background:#3d8fe8;border-radius:0 5px 5px 0;"></div>
<div style="left:1035px;top:910px;width:2px;height:8px;background:#5a9be6;"></div>
<div style="left:986px;top:919px;width:992px;height:25px;background:#232323;"></div>
<div style="left:995.0px;top:936px;width:1.6px;height:8px;background:#b0b0b0;"></div>
<div style="left:986px;top:919px;width:40px;height:25px;overflow:hidden;"><div class="t" style="position:absolute;left:-13.5px;top:4.15px;font-size:14px;line-height:14px;color:#bdbdbd;transform:scaleX(1.1819);transform-origin:0 0;">00:00f</div></div>
<div style="left:1101.75px;top:936px;width:1.6px;height:8px;background:#b0b0b0;"></div>
<div class="t" style="left:1079.25px;top:923.15px;font-size:14px;line-height:14px;color:#bdbdbd;transform:scaleX(1.1819);transform-origin:0 0;">00:12f</div>
<div style="left:1208.5px;top:936px;width:1.6px;height:8px;background:#b0b0b0;"></div>
<div class="t" style="left:1186.0px;top:923.15px;font-size:14px;line-height:14px;color:#bdbdbd;transform:scaleX(1.1819);transform-origin:0 0;">01:00f</div>
<div style="left:1315.25px;top:936px;width:1.6px;height:8px;background:#b0b0b0;"></div>
<div class="t" style="left:1292.75px;top:923.15px;font-size:14px;line-height:14px;color:#bdbdbd;transform:scaleX(1.1819);transform-origin:0 0;">01:12f</div>
<div style="left:1422.0px;top:936px;width:1.6px;height:8px;background:#b0b0b0;"></div>
<div class="t" style="left:1399.5px;top:923.15px;font-size:14px;line-height:14px;color:#bdbdbd;transform:scaleX(1.1819);transform-origin:0 0;">02:00f</div>
<div style="left:1528.75px;top:936px;width:1.6px;height:8px;background:#b0b0b0;"></div>
<div class="t" style="left:1506.25px;top:923.15px;font-size:14px;line-height:14px;color:#bdbdbd;transform:scaleX(1.1819);transform-origin:0 0;">02:12f</div>
<div style="left:1635.5px;top:936px;width:1.6px;height:8px;background:#b0b0b0;"></div>
<div class="t" style="left:1613.0px;top:923.15px;font-size:14px;line-height:14px;color:#bdbdbd;transform:scaleX(1.1819);transform-origin:0 0;">03:00f</div>
<div style="left:1742.25px;top:936px;width:1.6px;height:8px;background:#b0b0b0;"></div>
<div class="t" style="left:1719.75px;top:923.15px;font-size:14px;line-height:14px;color:#bdbdbd;transform:scaleX(1.1819);transform-origin:0 0;">03:12f</div>
<div style="left:1849.0px;top:936px;width:1.6px;height:8px;background:#b0b0b0;"></div>
<div class="t" style="left:1826.5px;top:923.15px;font-size:14px;line-height:14px;color:#bdbdbd;transform:scaleX(1.1819);transform-origin:0 0;">04:00f</div>
<div style="left:1955.75px;top:936px;width:1.6px;height:8px;background:#b0b0b0;"></div>
<div class="t" style="left:1933.25px;top:923.15px;font-size:14px;line-height:14px;color:#bdbdbd;transform:scaleX(1.1819);transform-origin:0 0;">04:12f</div>
<div style="left:1977px;top:919px;width:23px;height:25px;background:#272727;"></div>
<div style="left:986px;top:944px;width:992px;height:1px;background:#121212;"></div>
<div style="left:988px;top:945px;width:990px;height:18px;background:#666666;"></div>
<div style="left:988px;top:945px;width:6px;height:18px;background:#3d8fe8;border-radius:4px 0 0 4px;"></div>
<div style="left:986px;top:962px;width:992px;height:6px;background:#121212;"></div>
<div style="left:986px;top:963px;width:992px;height:4px;background:#2b2b2b;"></div>
<div style="left:1040px;top:963px;width:9px;height:4px;background:#4ec94e;"></div>
<div style="left:1977px;top:944px;width:23px;height:258px;background:#232323;"></div>
<svg style="left:1983px;top:946px;" width="14" height="16" viewBox="0 0 14 16"><path d="M1,1 H13 V10 L7,15 L1,10 Z" fill="#c0c0c0"/></svg>
<svg style="left:1979px;top:969px;" width="20" height="18" viewBox="0 0 20 18"><path d="M8,3 L1,9 L8,15" fill="none" stroke="#c0c0c0" stroke-width="1.4"/><rect x="9" y="4" width="10" height="9" fill="#c0c0c0"/><circle cx="7" cy="12" r="3" fill="#232323" stroke="#c0c0c0" stroke-width="1.5"/></svg>
<div style="left:986px;top:967.5px;width:991px;height:22px;background:#3d3d3d;"></div>
<div style="left:986px;top:967.5px;width:9px;height:22px;background:#2c2c2c;"></div>
<div style="left:1102.25px;top:968.5px;width:874.75px;height:19.5px;background:#525b8c;"></div>
<div style="left:986px;top:989.5px;width:991px;height:0.7px;background:#1b1b1b;"></div>
<div style="left:986px;top:990.12px;width:991px;height:22px;background:#3d3d3d;"></div>
<div style="left:986px;top:990.12px;width:9px;height:22px;background:#2c2c2c;"></div>
<div style="left:1102.25px;top:991.12px;width:874.75px;height:19.5px;background:#74738a;"></div>
<div style="left:986px;top:1012.12px;width:991px;height:0.7px;background:#1b1b1b;"></div>
<div style="left:986px;top:1012.74px;width:991px;height:22px;background:#333333;"></div>
<div style="left:986px;top:1012.74px;width:9px;height:22px;background:#2c2c2c;"></div>
<svg style="left:1470px;top:1017.74px;" width="14" height="12" viewBox="0 0 14 12"><path d="M1,0.5 H13 V2.5 Q7.5,6 13,9.5 V11.5 H1 V9.5 Q6.5,6 1,2.5 Z" fill="#c8c8c8"/></svg>
<svg style="left:1514px;top:1017.74px;" width="14" height="12" viewBox="0 0 14 12"><path d="M1,0.5 H13 V2.5 Q7.5,6 13,9.5 V11.5 H1 V9.5 Q6.5,6 1,2.5 Z" fill="#c8c8c8"/></svg>
<svg style="left:1746px;top:1017.74px;" width="14" height="12" viewBox="0 0 14 12"><path d="M1,0.5 H13 V2.5 Q7.5,6 13,9.5 V11.5 H1 V9.5 Q6.5,6 1,2.5 Z" fill="#c8c8c8"/></svg>
<svg style="left:1790px;top:1017.74px;" width="14" height="12" viewBox="0 0 14 12"><path d="M1,0.5 H13 V2.5 Q7.5,6 13,9.5 V11.5 H1 V9.5 Q6.5,6 1,2.5 Z" fill="#c8c8c8"/><path d="M7,0.5 H13 V2.5 Q7.5,6 13,9.5 V11.5 H7 Z" fill="#8e8e8e"/></svg>
<div style="left:986px;top:1034.74px;width:991px;height:0.7px;background:#1b1b1b;"></div>
<div style="left:986px;top:1035.36px;width:991px;height:22px;background:#3d3d3d;"></div>
<div style="left:986px;top:1035.36px;width:9px;height:22px;background:#2c2c2c;"></div>
<div style="left:1102.25px;top:1036.36px;width:874.75px;height:19.5px;background:#74738a;"></div>
<div style="left:986px;top:1057.36px;width:991px;height:0.7px;background:#1b1b1b;"></div>
<div style="left:986px;top:1057.98px;width:991px;height:22px;background:#333333;"></div>
<div style="left:986px;top:1057.98px;width:9px;height:22px;background:#2c2c2c;"></div>
<svg style="left:1381px;top:1062.98px;" width="14" height="12" viewBox="0 0 14 12"><path d="M1,0.5 H13 V2.5 Q7.5,6 13,9.5 V11.5 H1 V9.5 Q6.5,6 1,2.5 Z" fill="#c8c8c8"/></svg>
<svg style="left:1444px;top:1062.98px;" width="14" height="12" viewBox="0 0 14 12"><path d="M1,0.5 H13 V2.5 Q7.5,6 13,9.5 V11.5 H1 V9.5 Q6.5,6 1,2.5 Z" fill="#c8c8c8"/></svg>
<svg style="left:1746px;top:1062.98px;" width="14" height="12" viewBox="0 0 14 12"><path d="M1,0.5 H13 V2.5 Q7.5,6 13,9.5 V11.5 H1 V9.5 Q6.5,6 1,2.5 Z" fill="#c8c8c8"/></svg>
<svg style="left:1807px;top:1062.98px;" width="14" height="12" viewBox="0 0 14 12"><path d="M1,0.5 H13 V2.5 Q7.5,6 13,9.5 V11.5 H1 V9.5 Q6.5,6 1,2.5 Z" fill="#c8c8c8"/><path d="M7,0.5 H13 V2.5 Q7.5,6 13,9.5 V11.5 H7 Z" fill="#8e8e8e"/></svg>
<div style="left:986px;top:1079.98px;width:991px;height:0.7px;background:#1b1b1b;"></div>
<div style="left:986px;top:1080.6px;width:991px;height:22px;background:#3d3d3d;"></div>
<div style="left:986px;top:1080.6px;width:9px;height:22px;background:#2c2c2c;"></div>
<div style="left:1102.25px;top:1081.6px;width:874.75px;height:19.5px;background:#6f6656;"></div>
<svg style="left:1103.25px;top:1082.6px;" width="6" height="6" viewBox="0 0 6 6"><path d="M0.5,5.5 V0.5 H5.5" fill="none" stroke="#222" stroke-width="1"/></svg>
<div style="left:986px;top:1102.6px;width:991px;height:0.7px;background:#1b1b1b;"></div>
<div style="left:986px;top:1103.22px;width:991px;height:22px;background:#333333;"></div>
<div style="left:986px;top:1103.22px;width:9px;height:22px;background:#2c2c2c;"></div>
<svg style="left:1274px;top:1108.22px;" width="14" height="12" viewBox="0 0 14 12"><path d="M1,0.5 H13 V2.5 Q7.5,6 13,9.5 V11.5 H1 V9.5 Q6.5,6 1,2.5 Z" fill="#c8c8c8"/></svg>
<svg style="left:1355px;top:1108.22px;" width="14" height="12" viewBox="0 0 14 12"><path d="M1,0.5 H13 V2.5 Q7.5,6 13,9.5 V11.5 H1 V9.5 Q6.5,6 1,2.5 Z" fill="#c8c8c8"/></svg>
<svg style="left:1746px;top:1108.22px;" width="14" height="12" viewBox="0 0 14 12"><path d="M1,0.5 H13 V2.5 Q7.5,6 13,9.5 V11.5 H1 V9.5 Q6.5,6 1,2.5 Z" fill="#c8c8c8"/></svg>
<svg style="left:1826px;top:1108.22px;" width="14" height="12" viewBox="0 0 14 12"><path d="M1,0.5 H13 V2.5 Q7.5,6 13,9.5 V11.5 H1 V9.5 Q6.5,6 1,2.5 Z" fill="#c8c8c8"/><path d="M7,0.5 H13 V2.5 Q7.5,6 13,9.5 V11.5 H7 Z" fill="#8e8e8e"/></svg>
<div style="left:986px;top:1125.22px;width:991px;height:0.7px;background:#1b1b1b;"></div>
<div style="left:986px;top:1125.84px;width:991px;height:22px;background:#3d3d3d;"></div>
<div style="left:986px;top:1125.84px;width:9px;height:22px;background:#2c2c2c;"></div>
<div style="left:995.5px;top:1126.84px;width:981.5px;height:19.5px;background:#713c3c;"></div>
<div style="left:986px;top:1147.84px;width:991px;height:0.7px;background:#1b1b1b;"></div>
<div style="left:986px;top:1148.46px;width:991px;height:22px;background:#333333;"></div>
<div style="left:986px;top:1148.46px;width:9px;height:22px;background:#2c2c2c;"></div>
<svg style="left:990px;top:1153.46px;" width="14" height="12" viewBox="0 0 14 12"><path d="M1,0.5 H13 V2.5 Q7.5,6 13,9.5 V11.5 H1 V9.5 Q6.5,6 1,2.5 Z" fill="#c8c8c8"/></svg>
<svg style="left:1096px;top:1153.46px;" width="14" height="12" viewBox="0 0 14 12"><path d="M1,0.5 H13 V2.5 Q7.5,6 13,9.5 V11.5 H1 V9.5 Q6.5,6 1,2.5 Z" fill="#c8c8c8"/></svg>
<svg style="left:1889px;top:1153.46px;" width="14" height="12" viewBox="0 0 14 12"><path d="M1,0.5 H13 V2.5 Q7.5,6 13,9.5 V11.5 H1 V9.5 Q6.5,6 1,2.5 Z" fill="#c8c8c8"/></svg>
<div style="left:986px;top:1170.46px;width:991px;height:0.7px;background:#1b1b1b;"></div>
<div style="left:986px;top:1171.08px;width:991px;height:22px;background:#4a4a4a;"></div>
<div style="left:986px;top:1171.08px;width:9px;height:22px;background:#2c2c2c;"></div>
<div style="left:995.5px;top:1172.08px;width:981.5px;height:19.5px;background:#a84848;"></div>
<div style="left:995.5px;top:1172.08px;width:981.5px;height:1px;background:#d89090;"></div>
<div style="left:986px;top:1193.08px;width:991px;height:0.7px;background:#1b1b1b;"></div>
<div style="left:986px;top:1193px;width:991px;height:8px;background:#262626;"></div>
<div style="left:1039.5px;top:925px;width:2px;height:276px;background:#4a94ea;"></div>
<svg style="left:1032px;top:924px;" width="17" height="19" viewBox="0 0 17 19"><path d="M1,1 H16 V11 L8.5,18 L1,11 Z" fill="#4a94ea"/><rect x="8" y="7" width="1.2" height="6" fill="#1a3a60"/></svg>
<div style="left:2px;top:1201px;width:1998px;height:1px;background:#111;"></div>
<div style="left:2px;top:1202px;width:1998px;height:22px;background:#272727;"></div>
<svg style="left:7px;top:1205px;" width="16" height="17" viewBox="0 0 16 17"><rect x="1" y="1" width="10" height="10" fill="none" stroke="#3d8fe8" stroke-width="1.5"/><rect x="4" y="4" width="10" height="10" fill="#232323" stroke="#3d8fe8" stroke-width="1.5"/><rect x="7" y="7" width="8" height="9" fill="#232323" stroke="#3d8fe8" stroke-width="1.5"/><rect x="10" y="10" width="3" height="3" fill="#3d8fe8"/></svg>
<div style="left:28px;top:1203px;width:20px;height:20px;background:#262626;"></div>
<svg style="left:30px;top:1205px;" width="16" height="16" viewBox="0 0 16 16"><circle cx="6" cy="6" r="5" fill="none" stroke="#3d8fe8" stroke-width="1.5"/><rect x="7" y="7" width="8" height="8" fill="#232323" stroke="#3d8fe8" stroke-width="1.5"/><polygon points="9,13 13,9 13,13" fill="#3d8fe8"/></svg>
<svg style="left:52px;top:1205px;" width="14" height="15" viewBox="0 0 14 15"><path d="M4,1 L1,7.5 L4,14 M10,1 L13,7.5 L10,14" fill="none" stroke="#b0b0b0" stroke-width="2"/><rect x="5" y="2" width="4" height="11" fill="#777"/></svg>
<svg style="left:992px;top:1208px;" width="13" height="7" viewBox="0 0 13 7"><polygon points="0,6 5,1 8,4 9,3 13,6" fill="#c0c0c0"/></svg>
<div style="left:1037px;top:1211px;width:38px;height:2px;background:#444;"></div>
<svg style="left:1021px;top:1205px;" width="15" height="15" viewBox="0 0 15 15"><circle cx="7.5" cy="7.5" r="5" fill="#232323" stroke="#b8b8b8" stroke-width="1.8"/></svg>
<svg style="left:1088px;top:1204px;" width="22" height="11" viewBox="0 0 22 11"><polygon points="0,10 5,4 8,7 13,1 21,10" fill="#c8c8c8"/></svg>
<div style="left:1117px;top:1204px;width:785px;height:19px;background:#2c2c2c;border-radius:10px;"></div>
<svg style="left:0px;top:0px;pointer-events:none;" width="200" height="1224" viewBox="0 0 200 1224"><path d="M97,410 C71.7,527.6 32.2,609.4 33.1,796.4 C33.8,974.3 62.6,1019.5 97,1165" fill="none" stroke="#e8452a" stroke-width="4.6" stroke-linecap="round"/><polygon points="83.5,1159 109.5,1150 105.8,1180" fill="#e8452a"/></svg>
</body></html>
